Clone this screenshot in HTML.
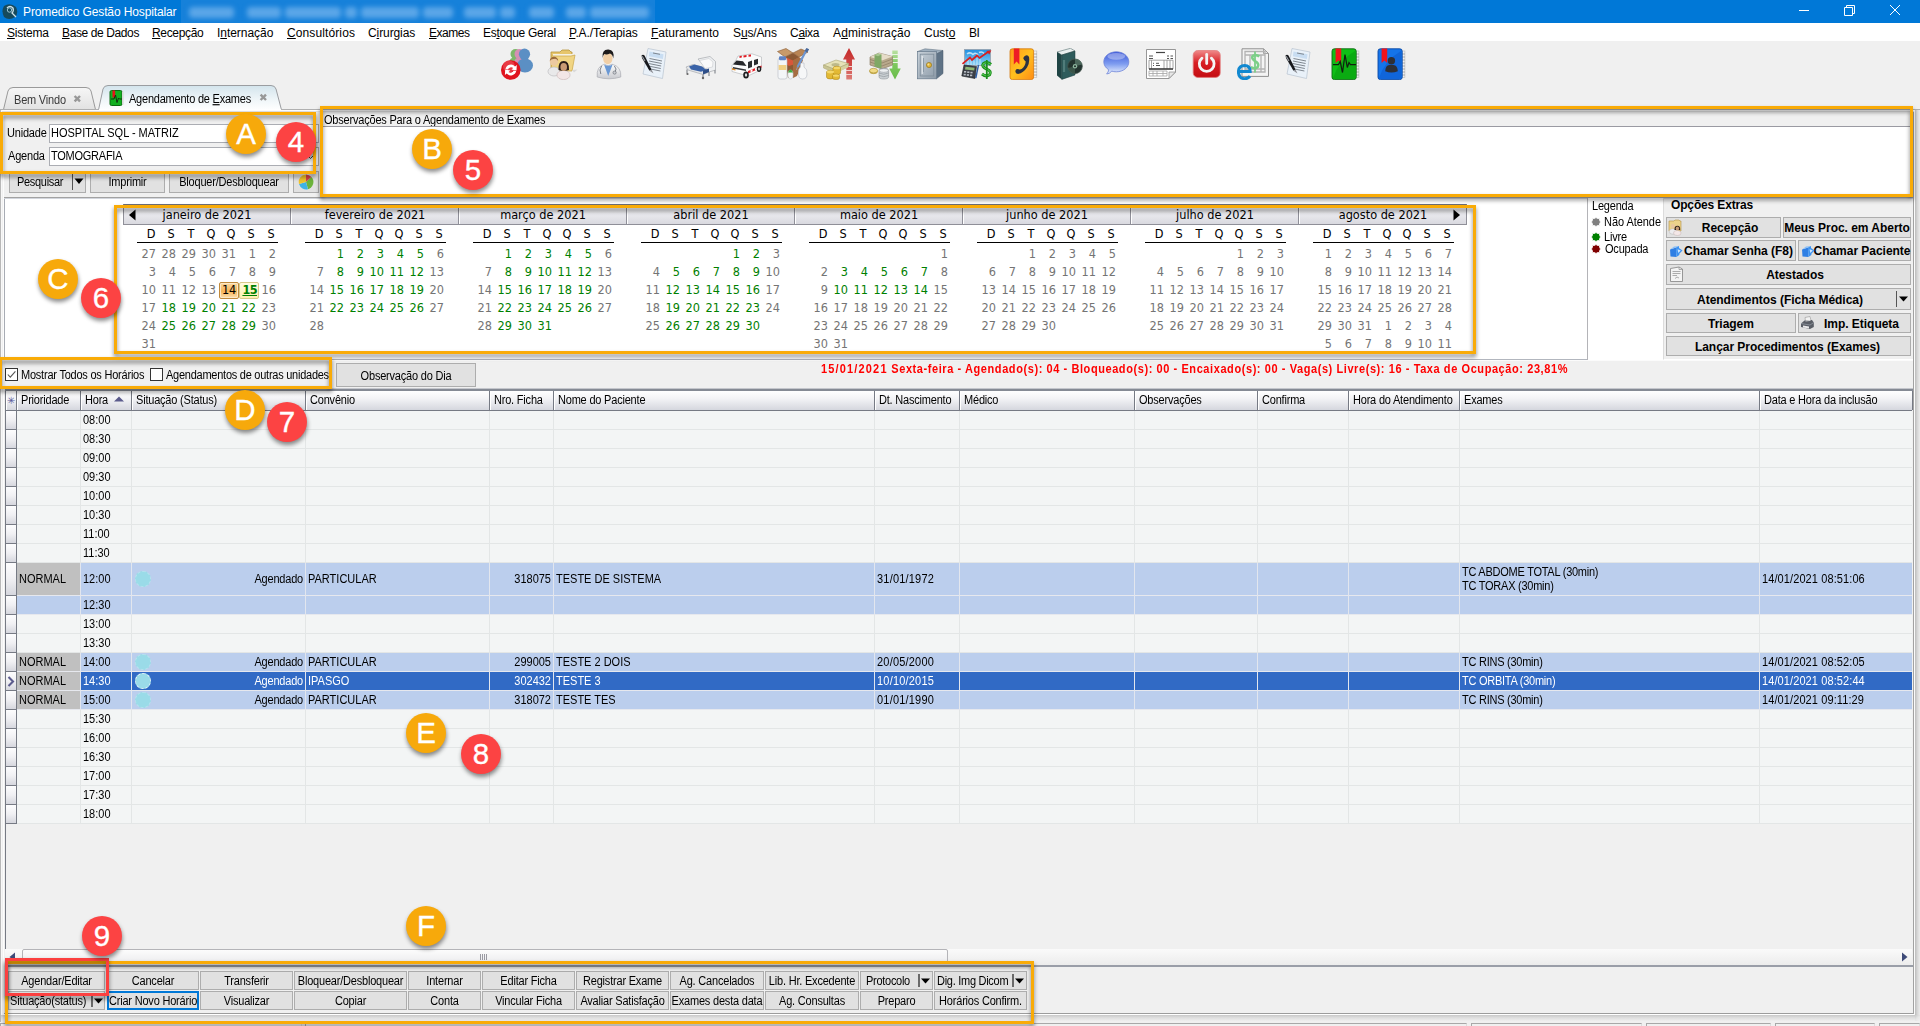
<!DOCTYPE html><html lang="pt-BR"><head><meta charset="utf-8"><title>Promedico Gestão Hospitalar</title><style>
*{box-sizing:border-box}
html,body{margin:0;padding:0}
body{width:1920px;height:1026px;overflow:hidden;background:#f0f0f0;position:relative;
 font-family:"Liberation Sans",sans-serif;font-size:11px;color:#000;line-height:13px}
.a{position:absolute}
.t{position:absolute;white-space:pre;letter-spacing:-.2px}
.u{text-decoration:underline}
.x{display:inline-block;line-height:13px;transform:scaleY(1.15);transform-origin:0 10px}
.btn{position:absolute;background:#e1e1e1;border:1px solid #adadad;text-align:center;white-space:pre;letter-spacing:-.2px}
.bb{position:absolute;background:#e1e1e1;border:1px solid #adadad;text-align:center;white-space:pre;font-weight:bold;font-size:12px;letter-spacing:.1px}
.inp{position:absolute;background:#fff;border:1px solid #abadb3;white-space:pre;padding:2px 0 0 1px;letter-spacing:0}
.obox{position:absolute;border:3px solid #f9ab07;filter:drop-shadow(.5px 3px 2.2px rgba(0,0,0,.5))}
.rbox{position:absolute;border:3px solid #fb4040;filter:drop-shadow(.5px 3px 2.2px rgba(0,0,0,.5))}
.badge{position:absolute;width:40px;height:40px;border-radius:50%;color:#fff;font-size:29.5px;line-height:39.4px;-webkit-text-stroke:.35px #fff;text-align:center;
 box-shadow:.5px 3px 4px rgba(0,0,0,.45)}
.bo{background:#f7a90b}
.br{background:#fc4343}
.cal{font-family:"DejaVu Sans Condensed","DejaVu Sans",sans-serif;font-size:12.6px;line-height:18px}
.cal .d{position:absolute;width:24px;text-align:right;color:#747474;white-space:pre}
.cal .g{color:#008000}
.cal .h{position:absolute;width:20px;text-align:center;color:#000}
.cal .m{position:absolute;text-align:center;color:#000;height:16px;line-height:14px}
.gh{position:absolute;top:0;height:19px;border-right:1px solid #767a84;border-left:1px solid #fff;padding:3px 0 0 4px;white-space:pre;letter-spacing:-.2px;
 background:linear-gradient(#ffffff,#f3f3f6 40%,#d5d7de);}
.row{position:absolute;left:17px;width:1895px;background:#f3f5f5;border-bottom:1px solid #e3e6e6}
.row.hl{background:#bbceed;border-bottom-color:#e6e8ee}
.row.sel{background:#316ac5;color:#fff;border-bottom-color:#e6e8ee}
.c{position:absolute;top:0;bottom:0;white-space:pre;letter-spacing:0}
.vl{position:absolute;width:1px;background:#e3e6e6}
</style></head><body>
<div class="a" style="left:0;top:0;width:1920px;height:23px;background:#0078d7"></div>
<div class="a" style="left:181px;top:0;width:474px;height:24px;background:#1681da;overflow:hidden"><div class="a" style="left:0;top:0;width:474px;height:24px;filter:blur(2.4px)"><div class="a" style="left:8px;top:7px;width:45px;height:11px;background:#5ba6e8;border-radius:4px"></div><div class="a" style="left:66px;top:7px;width:34px;height:11px;background:#5ba6e8;border-radius:4px"></div><div class="a" style="left:104px;top:7px;width:56px;height:11px;background:#5ba6e8;border-radius:4px"></div><div class="a" style="left:164px;top:7px;width:12px;height:11px;background:#5ba6e8;border-radius:4px"></div><div class="a" style="left:180px;top:7px;width:58px;height:11px;background:#5ba6e8;border-radius:4px"></div><div class="a" style="left:242px;top:7px;width:30px;height:11px;background:#5ba6e8;border-radius:4px"></div><div class="a" style="left:283px;top:7px;width:32px;height:11px;background:#5ba6e8;border-radius:4px"></div><div class="a" style="left:319px;top:7px;width:15px;height:11px;background:#5ba6e8;border-radius:4px"></div><div class="a" style="left:348px;top:7px;width:25px;height:11px;background:#5ba6e8;border-radius:4px"></div><div class="a" style="left:385px;top:7px;width:20px;height:11px;background:#5ba6e8;border-radius:4px"></div><div class="a" style="left:409px;top:7px;width:59px;height:11px;background:#5ba6e8;border-radius:4px"></div></div></div>
<svg class="a" style="left:2px;top:3px" width="17" height="17" viewBox="0 0 17 17"><path d="M2 3 Q8 -1 14 4 Q17 10 13 14 Q7 18 2 14 Q-1 8 2 3Z" fill="#164a5c"/><path d="M5 5 Q8 2 11 5 Q12 8 10 10 L14 14" stroke="#cfe3ea" stroke-width="1.3" fill="none"/><circle cx="7.5" cy="7" r="2.2" fill="none" stroke="#9cc3cf" stroke-width="1"/></svg>
<div class="t" style="left:23px;top:4.5px;font-size:12px;line-height:15px;color:#fff;letter-spacing:-.12px">Promedico Gestão Hospitalar</div>
<svg class="a" style="left:1790px;top:0" width="130" height="23" viewBox="0 0 130 23"><g stroke="#fff" stroke-width="1" fill="none"><path d="M9 10.5H19"/><path d="M54.5 7.5H62.5V15.5H54.5Z"/><path d="M56.5 7.5V5.5H64.5V13.5H62.5"/><path d="M100 5L110 15M110 5L100 15"/></g></svg>
<div class="a" style="left:0;top:23px;width:1920px;height:18px;background:#fff"></div>
<div class="t" style="left:7px;top:26px;font-size:12px;line-height:15px;letter-spacing:-0.24px"><span class="u">S</span>istema</div>
<div class="t" style="left:62px;top:26px;font-size:12px;line-height:15px;letter-spacing:-0.39px"><span class="u">B</span>ase de Dados</div>
<div class="t" style="left:152px;top:26px;font-size:12px;line-height:15px;letter-spacing:-0.34px"><span class="u">R</span>ecepção</div>
<div class="t" style="left:217px;top:26px;font-size:12px;line-height:15px;letter-spacing:-0.04px">I<span class="u">n</span>ternação</div>
<div class="t" style="left:287px;top:26px;font-size:12px;line-height:15px;letter-spacing:0.11px"><span class="u">C</span>onsultórios</div>
<div class="t" style="left:368px;top:26px;font-size:12px;line-height:15px;letter-spacing:-0.1px">C<span class="u">i</span>rurgias</div>
<div class="t" style="left:429px;top:26px;font-size:12px;line-height:15px;letter-spacing:-0.46px"><span class="u">E</span>xames</div>
<div class="t" style="left:483px;top:26px;font-size:12px;line-height:15px;letter-spacing:-0.3px">Es<span class="u">t</span>oque Geral</div>
<div class="t" style="left:569px;top:26px;font-size:12px;line-height:15px;letter-spacing:-0.09px"><span class="u">P</span>.A./Terapias</div>
<div class="t" style="left:651px;top:26px;font-size:12px;line-height:15px;letter-spacing:-0.01px"><span class="u">F</span>aturamento</div>
<div class="t" style="left:733px;top:26px;font-size:12px;line-height:15px;letter-spacing:-0.13px">S<span class="u">u</span>s/Ans</div>
<div class="t" style="left:790px;top:26px;font-size:12px;line-height:15px;letter-spacing:-0.3px">C<span class="u">a</span>ixa</div>
<div class="t" style="left:833px;top:26px;font-size:12px;line-height:15px;letter-spacing:0.12px">A<span class="u">d</span>ministração</div>
<div class="t" style="left:924px;top:26px;font-size:12px;line-height:15px;letter-spacing:-0.01px">Cust<span class="u">o</span></div>
<div class="t" style="left:969px;top:26px;font-size:12px;line-height:15px;letter-spacing:-0.42px">BI</div>
<svg class="a" style="left:501px;top:48px" width="32" height="32" viewBox="0 0 32 32"><circle cx="14.5" cy="6" r="5" fill="#7db86a"/><ellipse cx="14" cy="15" rx="6" ry="6" fill="#7db86a"/>
<circle cx="18.5" cy="6" r="5" fill="#d58fb4"/><ellipse cx="19" cy="15" rx="6" ry="6" fill="#d58fb4"/>
<circle cx="23.5" cy="6.2" r="5.6" fill="#5b8fc4"/><ellipse cx="24" cy="17.5" rx="8" ry="7" fill="#5b8fc4"/>
<circle cx="9.8" cy="22" r="9.8" fill="#e0131e"/><circle cx="8" cy="18.5" r="6" fill="#f2616a" opacity=".5"/>
<path d="M4.5 21A5.5 5.5 0 0 1 14 18.5L15.8 17L15.5 22.5L10.5 21.5L12.2 20A3.3 3.3 0 0 0 7 21.5Z" fill="#fff"/>
<path d="M15.2 23A5.5 5.5 0 0 1 5.7 25.5L3.9 27L4.2 21.5L9.2 22.5L7.5 24A3.3 3.3 0 0 0 12.7 22.5Z" fill="#fff"/></svg>
<svg class="a" style="left:547px;top:48px" width="32" height="32" viewBox="0 0 32 32"><path d="M4 4H13L15 2H22L24 4H25V22H4Z" fill="#e7c66c" stroke="#b8963c" stroke-width=".8"/>
<path d="M6 6H26L27 22H6Z" fill="#f6f1e2"/><path d="M4.5 8H24L28 7L25 23H4.5Z" fill="#f1d583" stroke="#c9a548" stroke-width=".7"/>
<path d="M25 22L30.5 21.5L27 24.5Z" fill="#d9d9d9"/>
<ellipse cx="7" cy="23.5" rx="6" ry="4.5" fill="#e9e9ea" stroke="#b5b5b8" stroke-width=".6"/><circle cx="7" cy="13.5" r="4.2" fill="#ecc9a0"/><path d="M2.8 13A4.2 4.2 0 0 1 11.2 13Q9 10 7 11Q4.5 10.5 2.8 13Z" fill="#9a6a3a"/>
<ellipse cx="16.5" cy="27" rx="6.6" ry="4.6" fill="#f2e6e6" stroke="#c7b3b3" stroke-width=".6"/><path d="M11.5 22Q11 13 16.7 13Q22.5 13 22 22Q19 23 16.7 22.5Q14 23 11.5 22Z" fill="#2a1d18"/><ellipse cx="16.7" cy="19" rx="3.3" ry="4" fill="#c89a74"/></svg>
<svg class="a" style="left:593px;top:48px" width="32" height="32" viewBox="0 0 32 32"><defs><linearGradient id="dc" x1="0" y1="0" x2="0" y2="1"><stop offset="0" stop-color="#fdfdfd"/><stop offset="1" stop-color="#c9cbd0"/></linearGradient></defs>
<path d="M4.2 29Q3.2 18.5 11.5 16.2L15 18L19 16.2Q28.6 18.5 27.8 29Q16 32.6 4.2 29Z" fill="url(#dc)" stroke="#a9abb1" stroke-width=".7"/>
<path d="M11 16.5L15.2 28L19.6 16.5Q15.2 19 11 16.5Z" fill="#6a98d4"/>
<ellipse cx="14.8" cy="10.3" rx="4.7" ry="6" fill="#f1cfa6"/><path d="M9.6 10Q8.6 1.2 15.4 1.5Q22 1.8 20.2 10.5Q19.8 6.5 17 5.5Q13.5 7 11.3 6Q9.9 7.5 9.6 10Z" fill="#1e1c1c"/>
<path d="M8.6 18Q5.8 22 7.8 26M21.4 18Q24.4 21 22 24" stroke="#7d828c" stroke-width="1" fill="none"/><circle cx="21.6" cy="24.6" r="1.6" fill="#c9ccd2" stroke="#646870" stroke-width=".6"/></svg>
<svg class="a" style="left:639px;top:48px" width="32" height="32" viewBox="0 0 32 32"><path d="M9 0.5L27 4L23.5 30.5L4 26Z" fill="#e9f1f9" stroke="#b7c3d0" stroke-width=".7"/>
<path d="M10.5 3.5L24.5 6.2L23.9 11L9.9 8.3Z" fill="#c8ddf2"/>
<g stroke="#7f8790" stroke-width="1"><path d="M10.5 10.5L23 13"/><path d="M10 13L22.6 15.5"/><path d="M9.7 15.5L22.2 18"/><path d="M9.3 18L21.8 20.5"/><path d="M9 20.5L21.4 23"/><path d="M14 5L21 6.3"/></g>
<path d="M2.5 7.5Q4 6 5.5 7.5L12.5 21.5L10.5 22.8L3 10Z" fill="#17181c"/><path d="M10.5 22.8L12.5 21.5L14.5 25.5Z" fill="#8d8f96"/><path d="M3.2 8.2L6 13" stroke="#9da1aa" stroke-width="1.1"/></svg>
<svg class="a" style="left:685px;top:48px" width="32" height="32" viewBox="0 0 32 32"><path d="M13 11L25 8.5L30.5 13.5L30.5 22L24 24Z" fill="#eef0f2" stroke="#a6a9ae" stroke-width=".7"/>
<path d="M1 19L8 16.5L19 19.5L24 24L18 26.5L3 22Z" fill="#e4e6e9" stroke="#a6a9ae" stroke-width=".7"/>
<path d="M4 18.6L9.5 16.6L17 18.4L21.5 22L16 23.8L6 21.5Z" fill="#3a63a8"/><path d="M14.5 12.5L24 10.5L28 14L27.5 19L20 20.5Z" fill="#fafafa" stroke="#c0c3c7" stroke-width=".5"/>
<path d="M2 21.5V25.5M18 26.5V30M24 24V28M30 22V25.5" stroke="#8e9298" stroke-width="1.3"/><path d="M18 22.5L24 20.5V24L18 26.5Z" fill="#2f4f88"/>
<circle cx="18" cy="30" r="1.2" fill="#666"/><circle cx="2.5" cy="26" r="1.1" fill="#666"/></svg>
<svg class="a" style="left:731px;top:48px" width="32" height="32" viewBox="0 0 32 32"><path d="M7 8L21 5.8L30.5 9V21.5L17 28L1 23.5V17.5L5 12Z" fill="#fbfbfb" stroke="#b9bbbe" stroke-width=".7"/>
<path d="M5.5 12.5L12 13.2L15.5 18L2 16.5Z" fill="#26282b"/><path d="M17 14L21 12.5V19L17 20.5Z" fill="#2b2d30"/><path d="M23 12L27 10.7V16L23 17.5Z" fill="#2b2d30"/>
<path d="M8.5 8L10.8 7.7V9.6L8.5 9.9ZM12.5 7.4L15.5 7V9L12.5 9.4ZM17.5 6.7L20 6.4V8.4L17.5 8.7Z" fill="#e01b22"/>
<path d="M17 23L30.5 17.5V19.8L17 25.4Z" fill="#e01b22"/><path d="M19.5 22L21.5 21.2V23.5L19.5 24.3ZM24 20.2L26 19.4V21.7L24 22.5Z" fill="#fff"/>
<path d="M1 20L4.5 20.8V22.5L1 21.7Z" fill="#e6902a"/><path d="M2 19L15 21.5V23L2 20.5Z" fill="#33363a"/>
<ellipse cx="15" cy="27" rx="2.8" ry="3.6" fill="#1c1d1f"/><ellipse cx="15" cy="27" rx="1.2" ry="1.7" fill="#dcdcdc"/><ellipse cx="28" cy="21" rx="2.2" ry="3" fill="#1c1d1f"/><ellipse cx="28" cy="21" rx=".9" ry="1.4" fill="#dcdcdc"/></svg>
<svg class="a" style="left:777px;top:48px" width="32" height="32" viewBox="0 0 32 32"><path d="M0.5 3.5L9 0.5L16 5L8 9Z" fill="#c79a6a" stroke="#8a5a32" stroke-width=".6"/><path d="M16 5L24 1L31 4L22 9Z" fill="#b98555" stroke="#8a5a32" stroke-width=".6"/>
<path d="M8 9L16 5L22 9L21 26L11 30Z" fill="#8c5a35"/><path d="M8 9L16 12.5L21.5 9.5L21 15L12 18L9 16Z" fill="#d9563a"/><path d="M16 12.5L22 9L26 12L20 28L16 30Z" fill="#a56d42"/>
<rect x="1" y="10" width="9" height="21" rx="2.2" fill="#f4f6f8" stroke="#b5bac2" stroke-width=".6"/><rect x="2" y="8.3" width="7" height="4" rx="1.2" fill="#5d82c4"/><rect x="1.6" y="17" width="7.8" height="5" fill="#f0cf83"/>
<ellipse cx="13.5" cy="26.5" rx="2.6" ry="4.5" fill="#f3f5f5" stroke="#b5bac2" stroke-width=".5"/><path d="M11 24.5Q13.5 18.5 16 24.5Z" fill="#3fae3f"/>
<path d="M21.5 26Q21 20.5 23.5 19V15H27V19Q30.5 21 30 26Q30 31 25.5 31Q21.5 31 21.5 26Z" fill="#f6f7f8" stroke="#b5bac2" stroke-width=".6"/>
<path d="M29.5 2L20.5 19" stroke="#6d95d0" stroke-width="2.2"/><path d="M30.8 0.6L29 3.8" stroke="#4a6a9c" stroke-width="3"/><path d="M20.5 19L19.4 22" stroke="#9aa0aa" stroke-width=".9"/></svg>
<svg class="a" style="left:823px;top:48px" width="32" height="32" viewBox="0 0 32 32"><defs><linearGradient id="ua" x1="0" y1="0" x2="0" y2="1"><stop offset="0" stop-color="#c42a2a"/><stop offset=".55" stop-color="#d04a48"/><stop offset="1" stop-color="#dd7e78"/></linearGradient></defs>
<path d="M26 0L32 11.5H29V31.5H23.3V11.5H20Z" fill="url(#ua)"/><path d="M23 18.5H29.2M23 22.5H29.2M23 26.5H29.2" stroke="#f0d5d2" stroke-width="1.2"/>
<path d="M0.5 17L13 12L25.5 15.5L12 21.5Z" fill="#e6e2b8" stroke="#a8a473" stroke-width=".6"/><path d="M0.5 17V20L12 25V21.5ZM12 21.5V25L25.5 18.5V15.5Z" fill="#c9c492" stroke="#a8a473" stroke-width=".5"/>
<ellipse cx="12.5" cy="16.7" rx="4" ry="1.7" fill="#bdb98a"/>
<path d="M14 21L25 16.5V19.5L14 24.5Z" fill="#d7d2a2"/>
<g fill="#e3b934" stroke="#a37d12" stroke-width=".5"><path d="M3.5 24Q3.5 22.3 7.5 22.3Q11.5 22.3 11.5 24V29Q11.5 31 7.5 31Q3.5 31 3.5 29Z"/><path d="M10 20Q10 18.3 13.8 18.3Q17.5 18.3 17.5 20V25Q17.5 26.8 13.8 26.8Q10 26.8 10 25Z"/><path d="M9.5 27.5Q9.5 26 13 26Q16.5 26 16.5 27.5V30Q16.5 31.6 13 31.6Q9.5 31.6 9.5 30Z"/></g>
<ellipse cx="7.5" cy="24" rx="3.6" ry="1.4" fill="#f4d768"/><ellipse cx="13.8" cy="20" rx="3.4" ry="1.3" fill="#f4d768"/><ellipse cx="13" cy="27.6" rx="3.2" ry="1.2" fill="#f4d768"/></svg>
<svg class="a" style="left:869px;top:48px" width="32" height="32" viewBox="0 0 32 32"><defs><linearGradient id="da" x1="0" y1="0" x2="0" y2="1"><stop offset="0" stop-color="#b9e0a2"/><stop offset=".5" stop-color="#7cc85d"/><stop offset="1" stop-color="#69bc4a"/></linearGradient></defs>
<path d="M23.3 2.5H28.7V20.5H31.8L26 31.5L20.2 20.5H23.3Z" fill="url(#da)"/><path d="M23 6.5H29M23 10.5H29M23 14.5H29" stroke="#e9f4e2" stroke-width="1.2"/>
<path d="M1 9L10 5L23.5 8.5V17L13 21L1 17Z" fill="#b9a98c" stroke="#85765c" stroke-width=".6"/><path d="M1 9L10 5L23.5 8.5L13 12.5Z" fill="#e6dcc8"/>
<path d="M1 11.5L13 15L23.5 11M1 14L13 18L23.5 14" stroke="#85765c" stroke-width=".6" fill="none"/>
<path d="M5.5 7L9 5.4L12.5 6.4V20.8L8.5 19.6L5.5 18.5Z" fill="#7fa865"/><path d="M5.5 7L9 5.4L12.5 6.4L9 8.2Z" fill="#a9c892"/>
<ellipse cx="4.6" cy="23.4" rx="4" ry="2.3" fill="#e3c45a" stroke="#9f8426" stroke-width=".5"/><ellipse cx="4.6" cy="22.6" rx="4" ry="2.3" fill="#f1da85" stroke="#9f8426" stroke-width=".5"/>
<path d="M10 22.5Q10 20.3 14.8 20.3Q19.6 20.3 19.6 22.5V28.8Q19.6 31 14.8 31Q10 31 10 28.8Z" fill="#c9ced2" stroke="#81878d" stroke-width=".5"/>
<ellipse cx="14.8" cy="22.5" rx="4.5" ry="1.8" fill="#eef0f2" stroke="#81878d" stroke-width=".4"/><path d="M10 25Q14.8 27.6 19.6 25M10 27.4Q14.8 30 19.6 27.4" stroke="#81878d" stroke-width=".5" fill="none"/></svg>
<svg class="a" style="left:915px;top:48px" width="32" height="32" viewBox="0 0 32 32"><defs><linearGradient id="sf" x1="0" y1="0" x2="1" y2="1"><stop offset="0" stop-color="#c9d2da"/><stop offset="1" stop-color="#8d9ba8"/></linearGradient></defs>
<path d="M2.5 3.5L10 0.8L28 2.5L21.5 6Z" fill="#9fb0bf" stroke="#5e6f7e" stroke-width=".5"/>
<path d="M21.5 6L28 2.5V25.5L21.5 30.8Z" fill="#5f7386" stroke="#4b5b6b" stroke-width=".5"/>
<rect x="2.5" y="3.5" width="19" height="27.3" fill="url(#sf)" stroke="#66788a" stroke-width=".7"/>
<rect x="5.2" y="6.2" width="13.6" height="21.8" fill="none" stroke="#7d8c9a" stroke-width=".8"/><path d="M7.2 8V26" stroke="#eef2f5" stroke-width="1"/><path d="M8.5 10V24" stroke="#7d8c9a" stroke-width=".7"/>
<circle cx="14" cy="17" r="2.6" fill="#e0b43a" stroke="#8d6d14" stroke-width=".6"/><circle cx="13.4" cy="16.4" r="1" fill="#f6e08e"/></svg>
<svg class="a" style="left:961px;top:48px" width="32" height="32" viewBox="0 0 32 32"><defs><linearGradient id="sk" x1="0" y1="0" x2="0" y2="1"><stop offset="0" stop-color="#1e8fe0"/><stop offset="1" stop-color="#8fd2f6"/></linearGradient></defs>
<rect x="3.4" y="1.4" width="26.2" height="16" fill="url(#sk)" stroke="#9aa3ad" stroke-width=".8"/>
<path d="M6 6Q9 3.5 12 6.5Q15 4 17 7M18 4.5Q21 3 23 5.5" stroke="#dff1fb" stroke-width="1.5" fill="none" opacity=".8"/>
<path d="M7 17V12M10 17V10M13 17V12.5M16 17V9.5M19 17V11" stroke="#e8f5fc" stroke-width="1" opacity=".7"/>
<path d="M1.5 15.8L9 9.5L11 12L16 7.5L18.5 10L27 4" stroke="#d91f1f" stroke-width="1.7" fill="none"/><path d="M30.4 2.2L25.3 3L28.3 6.6Z" fill="#d91f1f"/>
<path d="M3 17L15.5 18.5L14 30.5L0.8 28Z" fill="#3b3f46" stroke="#1f2226" stroke-width=".6"/><path d="M4.5 18.7L13.6 19.8L13.2 22.6L4 21.4Z" fill="#8fb873"/>
<g fill="#b7bcc4"><rect x="3" y="23" width="2.2" height="1.6"/><rect x="6.2" y="23.4" width="2.2" height="1.6"/><rect x="9.4" y="23.8" width="2.2" height="1.6"/><rect x="2.6" y="25.8" width="2.2" height="1.6"/><rect x="5.8" y="26.2" width="2.2" height="1.6"/><rect x="9" y="26.6" width="2.2" height="1.6"/></g>
<path d="M17.5 17L14.8 30" stroke="#2c5ea8" stroke-width="1.4"/>
<path d="M30 16.5Q26 13 22.5 15.5Q20 18.5 25.8 21Q31 23.5 28.6 26.8Q25 29.3 21 26" stroke="#1d8f1d" stroke-width="3" fill="none"/><path d="M30 16.5Q26 13 22.5 15.5Q20 18.5 25.8 21Q31 23.5 28.6 26.8Q25 29.3 21 26" stroke="#5fd15f" stroke-width="1" fill="none"/>
<path d="M25.8 12V31" stroke="#1d8f1d" stroke-width="1.8"/></svg>
<svg class="a" style="left:1007px;top:48px" width="32" height="32" viewBox="0 0 32 32"><defs><linearGradient id="pb" x1="0" y1="0" x2="1" y2="1"><stop offset="0" stop-color="#ff9a1a"/><stop offset=".5" stop-color="#ffc01e"/><stop offset="1" stop-color="#ff8c14"/></linearGradient></defs>
<rect x="24" y="3" width="5.8" height="26.5" fill="#f1f1f1" stroke="#b9b9b9" stroke-width=".6"/><path d="M26.5 6H30M26.5 9H30M26.5 12H30M26.5 15H30M26.5 18H30M26.5 21H30M26.5 24H30M26.5 27H30" stroke="#9d9d9d" stroke-width=".8"/>
<rect x="3" y="0.8" width="23.6" height="30.8" rx="2.4" fill="url(#pb)" stroke="#d4780c" stroke-width=".8"/>
<path d="M6.8 0.5H12.4V16.4L9.6 13.6L6.8 16.4Z" fill="#ee1c25"/>
<path d="M17.5 8.2Q20.8 6.2 22 9Q23 14.5 20 19.5Q16.5 24.8 11 26Q7.8 25.5 8.5 22.4Q9.4 20.6 11.8 21.2Q13.2 22 15 20.8Q18.4 18 18.7 13.5Q17.2 12.2 16.4 10.8Q16.2 9 17.5 8.2Z" fill="#2c3342"/></svg>
<svg class="a" style="left:1053px;top:48px" width="32" height="32" viewBox="0 0 32 32"><path d="M4 4L17.5 0.3L22 3L8.8 7Z" fill="#e9eeee" stroke="#3c5b5b" stroke-width=".5"/>
<path d="M4 4L8.8 7V31.4L4 27.5Z" fill="#1f4444"/><path d="M8.8 7L22 3V27L8.8 31.4Z" fill="#2f5c5c" stroke="#1b3a3a" stroke-width=".5"/>
<path d="M11 12V24" stroke="#5f8a88" stroke-width="2.2" opacity=".7"/>
<circle cx="22" cy="18.3" r="7.3" fill="#23342f" stroke="#42564f" stroke-width=".8"/><path d="M22 11A7.3 7.3 0 0 1 29 16.5L22 18.3Z" fill="#5d7d6d" opacity=".7"/><path d="M22 25.6A7.3 7.3 0 0 1 15 20L22 18.3Z" fill="#4a6a5a" opacity=".6"/>
<circle cx="22" cy="18.3" r="2.2" fill="#8fb8a0"/><circle cx="22" cy="18.3" r="1" fill="#1d2b27"/></svg>
<svg class="a" style="left:1099px;top:48px" width="32" height="32" viewBox="0 0 32 32"><defs><linearGradient id="cb" x1="0" y1="0" x2="0" y2="1"><stop offset="0" stop-color="#3a55d8"/><stop offset=".55" stop-color="#7f9df0"/><stop offset="1" stop-color="#e9f0fd"/></linearGradient></defs>
<path d="M17.3 3.8C24.3 3.8 29.8 8.2 29.8 13.8C29.8 19.4 24.3 23.8 17.3 23.8C15.6 23.8 14 23.6 12.6 23.1C11.4 25 9.6 25.8 7.6 25.9C8.9 24.8 9.6 23.3 9.5 21.6C6.6 19.8 4.8 17 4.8 13.8C4.8 8.2 10.3 3.8 17.3 3.8Z" fill="url(#cb)" stroke="#6b82d8" stroke-width=".8"/>
<ellipse cx="17.3" cy="8.3" rx="9" ry="3.4" fill="#fff" opacity=".35"/></svg>
<svg class="a" style="left:1145px;top:48px" width="32" height="32" viewBox="0 0 32 32"><path d="M1.5 1.5H30.5V24L24 30.5H1.5Z" fill="#fff" stroke="#8b8b8b" stroke-width=".9"/><path d="M24 30.5V24H30.5Z" fill="#e6e6e6" stroke="#8b8b8b" stroke-width=".7"/>
<path d="M11 4.5H20" stroke="#444" stroke-width="1.2"/><path d="M4 8H8M22 8H24M25.5 8H28M4 10.5H8M22 10.5H24M25.5 10.5H28" stroke="#555" stroke-width="1"/>
<path d="M4 12.2H28V21H4ZM6.5 12.2V21M19 12.2V21M22 12.2V21M25 12.2V21" stroke="#8e8e8e" stroke-width=".8" fill="none"/><path d="M4 21H28" stroke="#333" stroke-width="1.4"/>
<path d="M8 15.3H9M11 15.3H14M8 17.5H9M11 17.5H15" stroke="#555" stroke-width="1"/>
<path d="M4 23H22V28H4ZM4 25.5H22M8 23V28M12 23V28M18 23V28" stroke="#a5a5a5" stroke-width=".8" fill="none"/></svg>
<svg class="a" style="left:1191px;top:48px" width="32" height="32" viewBox="0 0 32 32"><defs><linearGradient id="pw" x1="0" y1="0" x2="0" y2="1"><stop offset="0" stop-color="#f08a8a"/><stop offset=".45" stop-color="#d81f24"/><stop offset="1" stop-color="#c40d12"/></linearGradient></defs>
<rect x="2.2" y="2.6" width="27" height="26.8" rx="4.5" fill="url(#pw)" stroke="#e27a7a" stroke-width=".8"/>
<path d="M11 10.2A7.4 7.4 0 1 0 20.4 10.2" stroke="#f4f4f4" stroke-width="2.8" fill="none" stroke-linecap="round"/><path d="M15.7 6.5V15.5" stroke="#f4f4f4" stroke-width="2.8" stroke-linecap="round"/></svg>
<svg class="a" style="left:1237px;top:48px" width="32" height="32" viewBox="0 0 32 32"><path d="M5 0.8H26.5L31.5 5.5V28.4H5Z" fill="#f4f4f4" stroke="#8f8f8f" stroke-width="1"/><path d="M26.5 0.8V5.5H31.5" fill="none" stroke="#8f8f8f" stroke-width=".8"/>
<path d="M8 3.5H28V24H8ZM8 7H28M13 7V24M24 7V24M8 21H28" stroke="#b3b3b3" stroke-width="1.3" fill="none"/>
<path d="M22.3 8.6Q19.5 6.2 16.2 7.6Q13.6 9.6 17.6 12.8Q22.6 15.4 20.8 18.8Q18 21.6 13.8 19" stroke="#7ccf88" stroke-width="2.6" fill="none"/><path d="M18 3.5V24.5" stroke="#7ccf88" stroke-width="1.8"/>
<path d="M2 23.6H13.2Q13.2 17.6 7.6 17.6Q1.6 17.8 1.4 24Q1.8 30.6 8 30.8Q11.4 30.6 13 28.2" stroke="#1188d0" stroke-width="3" fill="none"/></svg>
<svg class="a" style="left:1283px;top:48px" width="32" height="32" viewBox="0 0 32 32"><path d="M9 0.5L27 4L23.5 30.5L4 26Z" fill="#e9f1f9" stroke="#b7c3d0" stroke-width=".7"/>
<path d="M10.5 3.5L24.5 6.2L23.9 11L9.9 8.3Z" fill="#c8ddf2"/>
<g stroke="#7f8790" stroke-width="1"><path d="M10.5 10.5L23 13"/><path d="M10 13L22.6 15.5"/><path d="M9.7 15.5L22.2 18"/><path d="M9.3 18L21.8 20.5"/><path d="M9 20.5L21.4 23"/><path d="M14 5L21 6.3"/></g>
<path d="M2.5 7.5Q4 6 5.5 7.5L12.5 21.5L10.5 22.8L3 10Z" fill="#17181c"/><path d="M10.5 22.8L12.5 21.5L14.5 25.5Z" fill="#8d8f96"/><path d="M3.2 8.2L6 13" stroke="#9da1aa" stroke-width="1.1"/></svg>
<svg class="a" style="left:1329px;top:48px" width="32" height="32" viewBox="0 0 32 32"><rect x="24.5" y="3" width="5.4" height="26.5" fill="#f1f1f1" stroke="#b9b9b9" stroke-width=".6"/><path d="M27 6H30M27 9H30M27 12H30M27 15H30M27 18H30M27 21H30M27 24H30M27 27H30" stroke="#9d9d9d" stroke-width=".8"/>
<rect x="3" y="0.8" width="24.2" height="30.8" rx="2.4" fill="#0fbf16" stroke="#0a6a10" stroke-width=".9"/><path d="M4 30Q10 12 26 3V29Q26 31 24 31H5Z" fill="#0a9a10" opacity=".55"/>
<path d="M6.6 0.5H12.2V15L9.4 12.4L6.6 15Z" fill="#f0131c"/><path d="M4 16.5H9.5L11.2 13.5L13.5 24.5L16 6.5L18.3 19.5L20 14.5L21.4 16.5H27" stroke="#10200f" stroke-width="1.25" fill="none"/></svg>
<svg class="a" style="left:1375px;top:48px" width="32" height="32" viewBox="0 0 32 32"><rect x="24.5" y="3" width="5.4" height="26.5" fill="#f1f1f1" stroke="#b9b9b9" stroke-width=".6"/><path d="M27 6H30M27 9H30M27 12H30M27 15H30M27 18H30M27 21H30M27 24H30M27 27H30" stroke="#9d9d9d" stroke-width=".8"/>
<rect x="3" y="0.8" width="24.2" height="30.8" rx="2.4" fill="#1474ea" stroke="#0b47a3" stroke-width=".9"/><path d="M4 30Q10 12 26 3V29Q26 31 24 31H5Z" fill="#0d5acb" opacity=".55"/>
<path d="M6.6 0.5H12.2V15L9.4 12.4L6.6 15Z" fill="#f0131c"/><circle cx="16.4" cy="12.8" r="3.7" fill="#2e2f35"/><path d="M10.2 23.2Q10.4 17.6 14.4 17H18.4Q22.6 17.6 22.8 23.2Q16.4 25.8 10.2 23.2Z" fill="#2e2f35"/></svg>
<svg class="a" style="left:0;top:84px" width="300" height="27" viewBox="0 0 300 27">
<defs><linearGradient id="tg1" x1="0" y1="0" x2="0" y2="1"><stop offset="0" stop-color="#f6f6f6"/><stop offset="1" stop-color="#e2e2e2"/></linearGradient>
<linearGradient id="tg2" x1="0" y1="0" x2="0" y2="1"><stop offset="0" stop-color="#d3e4ec"/><stop offset=".55" stop-color="#eef5f8"/><stop offset="1" stop-color="#ffffff"/></linearGradient></defs>
<path d="M3.5 25.5 L8 7 Q9 3.5 13 3.5 H86 Q90 3.5 91 7 L95.5 25.5 Z" fill="url(#tg1)" stroke="#9a9a9a" stroke-width="1"/>
<path d="M98.5 26 L103 5 Q104 1.5 108 1.5 H271 Q275 1.5 276 5 L281.5 26 Z" fill="url(#tg2)" stroke="#9b9da1" stroke-width="1"/>
<path d="M99 26H281" stroke="#fff" stroke-width="2"/>
<g stroke="#989898" stroke-width="2.4"><path d="M74.6 12L80 17.4M80 12L74.6 17.4"/><path d="M260.6 10.6L266 16M266 10.6L260.6 16"/></g>
<g transform="translate(110,6)"><rect x="0" y="0.5" width="12" height="15" rx="1.5" fill="#12b020" stroke="#0a6a12" stroke-width="1"/><rect x="12" y="1.5" width="1.6" height="13" fill="#d8d8d8"/><rect x="2.5" y="0.5" width="2.6" height="7" fill="#e8101a"/><path d="M1 9H4L5.5 5L7 12.5L8.5 8L9.5 9H12" stroke="#103010" stroke-width="1" fill="none"/></g>
</svg>
<div class="t" style="left:14px;top:94px;color:#3a3a3a"><span class="x">Bem Vindo</span></div>
<div class="t" style="left:129px;top:93px;letter-spacing:-.22px"><span class="x">Agendamento de <span class="u">E</span>xames</span></div>
<div class="a" style="left:0;top:109px;width:1920px;height:1px;background:#b0b0b0"></div>
<div class="a" style="left:99px;top:109px;width:182px;height:1px;background:#fff"></div>
<div class="a" style="left:0;top:110px;width:1920px;height:1px;background:#fff"></div>
<div class="a" style="left:0;top:111px;width:1920px;height:1px;background:#e3e3e3"></div>
<div class="t" style="left:7px;top:127px"><span class="x">Unidade</span></div>
<div class="t" style="left:8px;top:150px"><span class="x">Agenda</span></div>
<div class="inp" style="left:49px;top:124px;width:270px;height:19px"><span class="x">HOSPITAL SQL - MATRIZ</span></div>
<div class="inp" style="left:49px;top:147px;width:270px;height:19px;letter-spacing:-.25px"><span class="x">TOMOGRAFIA</span></div>
<svg class="a" style="left:303px;top:124px" width="15" height="42" viewBox="0 0 15 42"><path d="M4 8L7.5 11.5L11 8M4 31L7.5 34.5L11 31" stroke="#444" fill="none" stroke-width="1"/></svg>
<div class="btn" style="left:9px;top:171px;width:77px;height:22px;line-height:20px;text-align:left;padding-left:7px;letter-spacing:-.3px"><span class="x">Pesquisar</span></div>
<div class="a" style="left:72px;top:174px;width:1px;height:16px;background:#555"></div>
<svg class="a" style="left:74px;top:178px" width="10" height="7" viewBox="0 0 10 7"><path d="M0.5 0.5H9.5L5 6Z" fill="#000"/></svg>
<div class="btn" style="left:90px;top:171px;width:75px;height:22px;line-height:20px"><span class="x">Imprimir</span></div>
<div class="btn" style="left:169px;top:171px;width:120px;height:22px;line-height:20px"><span class="x">Bloquer/Desbloquear</span></div>
<div class="btn" style="left:293px;top:171px;width:26px;height:22px"></div>
<svg class="a" style="left:297px;top:173px" width="18" height="18" viewBox="0 0 18 18"><circle cx="9" cy="9" r="7.6" fill="#e8e8e8"/>
<path d="M9 9L9 1.5A7.5 7.5 0 0 1 14.5 4Z" fill="#d8434a"/><path d="M9 9L14.5 4A7.5 7.5 0 0 1 11 16.2Z" fill="#6cb33a"/>
<path d="M9 9L11 16.2A7.5 7.5 0 0 1 2 11Z" fill="#3fb2e4"/><path d="M9 9L2 11A7.5 7.5 0 0 1 9 1.5Z" fill="#f0c22c"/></svg>
<div class="t" style="left:324px;top:114px;letter-spacing:-.2px"><span class="x">Observações Para o Agendamento de Exames</span></div>
<div class="a" style="left:322px;top:126px;width:1590px;height:70px;background:#fff;border:1px solid #c4c4c8;border-top-color:#9a9aa2"></div>
<div class="a" style="left:4px;top:197px;width:1909px;height:2px;background:linear-gradient(#a2a2a2 50%,#d2d5dc 50%)"></div>
<div class="a" style="left:4px;top:199px;width:1584px;height:161px;background:#fff;border:1px solid #a8acb4;border-top:none;border-right-color:#b2b6be;border-bottom-color:#b2b6be"></div>
<div class="a" style="left:123px;top:204px;width:1344px;height:21px;background:linear-gradient(#f6f6f8,#ececf0 40%,#d9d9df);border:1px solid #8f8f98;border-top-color:#6f6f78"></div>
<div class="cal">
<div class="m" style="left:123px;top:208px;width:168px">janeiro de 2021</div>
<div class="h" style="left:141px;top:225px">D</div>
<div class="h" style="left:161px;top:225px">S</div>
<div class="h" style="left:181px;top:225px">T</div>
<div class="h" style="left:201px;top:225px">Q</div>
<div class="h" style="left:221px;top:225px">Q</div>
<div class="h" style="left:241px;top:225px">S</div>
<div class="h" style="left:261px;top:225px">S</div>
<div class="a" style="left:137px;top:242px;width:141px;height:1px;background:#000"></div>
<div class="d" style="left:132px;top:245px">27</div>
<div class="d" style="left:152px;top:245px">28</div>
<div class="d" style="left:172px;top:245px">29</div>
<div class="d" style="left:192px;top:245px">30</div>
<div class="d" style="left:212px;top:245px">31</div>
<div class="d" style="left:232px;top:245px">1</div>
<div class="d" style="left:252px;top:245px">2</div>
<div class="d" style="left:132px;top:263px">3</div>
<div class="d" style="left:152px;top:263px">4</div>
<div class="d" style="left:172px;top:263px">5</div>
<div class="d" style="left:192px;top:263px">6</div>
<div class="d" style="left:212px;top:263px">7</div>
<div class="d" style="left:232px;top:263px">8</div>
<div class="d" style="left:252px;top:263px">9</div>
<div class="d" style="left:132px;top:281px">10</div>
<div class="d" style="left:152px;top:281px">11</div>
<div class="d" style="left:172px;top:281px">12</div>
<div class="d" style="left:192px;top:281px">13</div>
<div class="d" style="left:252px;top:281px">16</div>
<div class="d" style="left:132px;top:299px">17</div>
<div class="d g" style="left:152px;top:299px">18</div>
<div class="d g" style="left:172px;top:299px">19</div>
<div class="d g" style="left:192px;top:299px">20</div>
<div class="d g" style="left:212px;top:299px">21</div>
<div class="d g" style="left:232px;top:299px">22</div>
<div class="d" style="left:252px;top:299px">23</div>
<div class="d" style="left:132px;top:317px">24</div>
<div class="d g" style="left:152px;top:317px">25</div>
<div class="d g" style="left:172px;top:317px">26</div>
<div class="d g" style="left:192px;top:317px">27</div>
<div class="d g" style="left:212px;top:317px">28</div>
<div class="d g" style="left:232px;top:317px">29</div>
<div class="d" style="left:252px;top:317px">30</div>
<div class="d" style="left:132px;top:335px">31</div>
<div class="a" style="left:290px;top:205px;width:1px;height:19px;background:#8f8f98"></div><div class="a" style="left:291px;top:205px;width:1px;height:19px;background:#fff"></div>
<div class="m" style="left:291px;top:208px;width:168px">fevereiro de 2021</div>
<div class="h" style="left:309px;top:225px">D</div>
<div class="h" style="left:329px;top:225px">S</div>
<div class="h" style="left:349px;top:225px">T</div>
<div class="h" style="left:369px;top:225px">Q</div>
<div class="h" style="left:389px;top:225px">Q</div>
<div class="h" style="left:409px;top:225px">S</div>
<div class="h" style="left:429px;top:225px">S</div>
<div class="a" style="left:305px;top:242px;width:141px;height:1px;background:#000"></div>
<div class="d g" style="left:320px;top:245px">1</div>
<div class="d g" style="left:340px;top:245px">2</div>
<div class="d g" style="left:360px;top:245px">3</div>
<div class="d g" style="left:380px;top:245px">4</div>
<div class="d g" style="left:400px;top:245px">5</div>
<div class="d" style="left:420px;top:245px">6</div>
<div class="d" style="left:300px;top:263px">7</div>
<div class="d g" style="left:320px;top:263px">8</div>
<div class="d g" style="left:340px;top:263px">9</div>
<div class="d g" style="left:360px;top:263px">10</div>
<div class="d g" style="left:380px;top:263px">11</div>
<div class="d g" style="left:400px;top:263px">12</div>
<div class="d" style="left:420px;top:263px">13</div>
<div class="d" style="left:300px;top:281px">14</div>
<div class="d g" style="left:320px;top:281px">15</div>
<div class="d g" style="left:340px;top:281px">16</div>
<div class="d g" style="left:360px;top:281px">17</div>
<div class="d g" style="left:380px;top:281px">18</div>
<div class="d g" style="left:400px;top:281px">19</div>
<div class="d" style="left:420px;top:281px">20</div>
<div class="d" style="left:300px;top:299px">21</div>
<div class="d g" style="left:320px;top:299px">22</div>
<div class="d g" style="left:340px;top:299px">23</div>
<div class="d g" style="left:360px;top:299px">24</div>
<div class="d g" style="left:380px;top:299px">25</div>
<div class="d g" style="left:400px;top:299px">26</div>
<div class="d" style="left:420px;top:299px">27</div>
<div class="d" style="left:300px;top:317px">28</div>
<div class="a" style="left:458px;top:205px;width:1px;height:19px;background:#8f8f98"></div><div class="a" style="left:459px;top:205px;width:1px;height:19px;background:#fff"></div>
<div class="m" style="left:459px;top:208px;width:168px">março de 2021</div>
<div class="h" style="left:477px;top:225px">D</div>
<div class="h" style="left:497px;top:225px">S</div>
<div class="h" style="left:517px;top:225px">T</div>
<div class="h" style="left:537px;top:225px">Q</div>
<div class="h" style="left:557px;top:225px">Q</div>
<div class="h" style="left:577px;top:225px">S</div>
<div class="h" style="left:597px;top:225px">S</div>
<div class="a" style="left:473px;top:242px;width:141px;height:1px;background:#000"></div>
<div class="d g" style="left:488px;top:245px">1</div>
<div class="d g" style="left:508px;top:245px">2</div>
<div class="d g" style="left:528px;top:245px">3</div>
<div class="d g" style="left:548px;top:245px">4</div>
<div class="d g" style="left:568px;top:245px">5</div>
<div class="d" style="left:588px;top:245px">6</div>
<div class="d" style="left:468px;top:263px">7</div>
<div class="d g" style="left:488px;top:263px">8</div>
<div class="d g" style="left:508px;top:263px">9</div>
<div class="d g" style="left:528px;top:263px">10</div>
<div class="d g" style="left:548px;top:263px">11</div>
<div class="d g" style="left:568px;top:263px">12</div>
<div class="d" style="left:588px;top:263px">13</div>
<div class="d" style="left:468px;top:281px">14</div>
<div class="d g" style="left:488px;top:281px">15</div>
<div class="d g" style="left:508px;top:281px">16</div>
<div class="d g" style="left:528px;top:281px">17</div>
<div class="d g" style="left:548px;top:281px">18</div>
<div class="d g" style="left:568px;top:281px">19</div>
<div class="d" style="left:588px;top:281px">20</div>
<div class="d" style="left:468px;top:299px">21</div>
<div class="d g" style="left:488px;top:299px">22</div>
<div class="d g" style="left:508px;top:299px">23</div>
<div class="d g" style="left:528px;top:299px">24</div>
<div class="d g" style="left:548px;top:299px">25</div>
<div class="d g" style="left:568px;top:299px">26</div>
<div class="d" style="left:588px;top:299px">27</div>
<div class="d" style="left:468px;top:317px">28</div>
<div class="d g" style="left:488px;top:317px">29</div>
<div class="d g" style="left:508px;top:317px">30</div>
<div class="d g" style="left:528px;top:317px">31</div>
<div class="a" style="left:626px;top:205px;width:1px;height:19px;background:#8f8f98"></div><div class="a" style="left:627px;top:205px;width:1px;height:19px;background:#fff"></div>
<div class="m" style="left:627px;top:208px;width:168px">abril de 2021</div>
<div class="h" style="left:645px;top:225px">D</div>
<div class="h" style="left:665px;top:225px">S</div>
<div class="h" style="left:685px;top:225px">T</div>
<div class="h" style="left:705px;top:225px">Q</div>
<div class="h" style="left:725px;top:225px">Q</div>
<div class="h" style="left:745px;top:225px">S</div>
<div class="h" style="left:765px;top:225px">S</div>
<div class="a" style="left:641px;top:242px;width:141px;height:1px;background:#000"></div>
<div class="d g" style="left:716px;top:245px">1</div>
<div class="d g" style="left:736px;top:245px">2</div>
<div class="d" style="left:756px;top:245px">3</div>
<div class="d" style="left:636px;top:263px">4</div>
<div class="d g" style="left:656px;top:263px">5</div>
<div class="d g" style="left:676px;top:263px">6</div>
<div class="d g" style="left:696px;top:263px">7</div>
<div class="d g" style="left:716px;top:263px">8</div>
<div class="d g" style="left:736px;top:263px">9</div>
<div class="d" style="left:756px;top:263px">10</div>
<div class="d" style="left:636px;top:281px">11</div>
<div class="d g" style="left:656px;top:281px">12</div>
<div class="d g" style="left:676px;top:281px">13</div>
<div class="d g" style="left:696px;top:281px">14</div>
<div class="d g" style="left:716px;top:281px">15</div>
<div class="d g" style="left:736px;top:281px">16</div>
<div class="d" style="left:756px;top:281px">17</div>
<div class="d" style="left:636px;top:299px">18</div>
<div class="d g" style="left:656px;top:299px">19</div>
<div class="d g" style="left:676px;top:299px">20</div>
<div class="d g" style="left:696px;top:299px">21</div>
<div class="d g" style="left:716px;top:299px">22</div>
<div class="d g" style="left:736px;top:299px">23</div>
<div class="d" style="left:756px;top:299px">24</div>
<div class="d" style="left:636px;top:317px">25</div>
<div class="d g" style="left:656px;top:317px">26</div>
<div class="d g" style="left:676px;top:317px">27</div>
<div class="d g" style="left:696px;top:317px">28</div>
<div class="d g" style="left:716px;top:317px">29</div>
<div class="d g" style="left:736px;top:317px">30</div>
<div class="a" style="left:794px;top:205px;width:1px;height:19px;background:#8f8f98"></div><div class="a" style="left:795px;top:205px;width:1px;height:19px;background:#fff"></div>
<div class="m" style="left:795px;top:208px;width:168px">maio de 2021</div>
<div class="h" style="left:813px;top:225px">D</div>
<div class="h" style="left:833px;top:225px">S</div>
<div class="h" style="left:853px;top:225px">T</div>
<div class="h" style="left:873px;top:225px">Q</div>
<div class="h" style="left:893px;top:225px">Q</div>
<div class="h" style="left:913px;top:225px">S</div>
<div class="h" style="left:933px;top:225px">S</div>
<div class="a" style="left:809px;top:242px;width:141px;height:1px;background:#000"></div>
<div class="d" style="left:924px;top:245px">1</div>
<div class="d" style="left:804px;top:263px">2</div>
<div class="d g" style="left:824px;top:263px">3</div>
<div class="d g" style="left:844px;top:263px">4</div>
<div class="d g" style="left:864px;top:263px">5</div>
<div class="d g" style="left:884px;top:263px">6</div>
<div class="d g" style="left:904px;top:263px">7</div>
<div class="d" style="left:924px;top:263px">8</div>
<div class="d" style="left:804px;top:281px">9</div>
<div class="d g" style="left:824px;top:281px">10</div>
<div class="d g" style="left:844px;top:281px">11</div>
<div class="d g" style="left:864px;top:281px">12</div>
<div class="d g" style="left:884px;top:281px">13</div>
<div class="d g" style="left:904px;top:281px">14</div>
<div class="d" style="left:924px;top:281px">15</div>
<div class="d" style="left:804px;top:299px">16</div>
<div class="d" style="left:824px;top:299px">17</div>
<div class="d" style="left:844px;top:299px">18</div>
<div class="d" style="left:864px;top:299px">19</div>
<div class="d" style="left:884px;top:299px">20</div>
<div class="d" style="left:904px;top:299px">21</div>
<div class="d" style="left:924px;top:299px">22</div>
<div class="d" style="left:804px;top:317px">23</div>
<div class="d" style="left:824px;top:317px">24</div>
<div class="d" style="left:844px;top:317px">25</div>
<div class="d" style="left:864px;top:317px">26</div>
<div class="d" style="left:884px;top:317px">27</div>
<div class="d" style="left:904px;top:317px">28</div>
<div class="d" style="left:924px;top:317px">29</div>
<div class="d" style="left:804px;top:335px">30</div>
<div class="d" style="left:824px;top:335px">31</div>
<div class="a" style="left:962px;top:205px;width:1px;height:19px;background:#8f8f98"></div><div class="a" style="left:963px;top:205px;width:1px;height:19px;background:#fff"></div>
<div class="m" style="left:963px;top:208px;width:168px">junho de 2021</div>
<div class="h" style="left:981px;top:225px">D</div>
<div class="h" style="left:1001px;top:225px">S</div>
<div class="h" style="left:1021px;top:225px">T</div>
<div class="h" style="left:1041px;top:225px">Q</div>
<div class="h" style="left:1061px;top:225px">Q</div>
<div class="h" style="left:1081px;top:225px">S</div>
<div class="h" style="left:1101px;top:225px">S</div>
<div class="a" style="left:977px;top:242px;width:141px;height:1px;background:#000"></div>
<div class="d" style="left:1012px;top:245px">1</div>
<div class="d" style="left:1032px;top:245px">2</div>
<div class="d" style="left:1052px;top:245px">3</div>
<div class="d" style="left:1072px;top:245px">4</div>
<div class="d" style="left:1092px;top:245px">5</div>
<div class="d" style="left:972px;top:263px">6</div>
<div class="d" style="left:992px;top:263px">7</div>
<div class="d" style="left:1012px;top:263px">8</div>
<div class="d" style="left:1032px;top:263px">9</div>
<div class="d" style="left:1052px;top:263px">10</div>
<div class="d" style="left:1072px;top:263px">11</div>
<div class="d" style="left:1092px;top:263px">12</div>
<div class="d" style="left:972px;top:281px">13</div>
<div class="d" style="left:992px;top:281px">14</div>
<div class="d" style="left:1012px;top:281px">15</div>
<div class="d" style="left:1032px;top:281px">16</div>
<div class="d" style="left:1052px;top:281px">17</div>
<div class="d" style="left:1072px;top:281px">18</div>
<div class="d" style="left:1092px;top:281px">19</div>
<div class="d" style="left:972px;top:299px">20</div>
<div class="d" style="left:992px;top:299px">21</div>
<div class="d" style="left:1012px;top:299px">22</div>
<div class="d" style="left:1032px;top:299px">23</div>
<div class="d" style="left:1052px;top:299px">24</div>
<div class="d" style="left:1072px;top:299px">25</div>
<div class="d" style="left:1092px;top:299px">26</div>
<div class="d" style="left:972px;top:317px">27</div>
<div class="d" style="left:992px;top:317px">28</div>
<div class="d" style="left:1012px;top:317px">29</div>
<div class="d" style="left:1032px;top:317px">30</div>
<div class="a" style="left:1130px;top:205px;width:1px;height:19px;background:#8f8f98"></div><div class="a" style="left:1131px;top:205px;width:1px;height:19px;background:#fff"></div>
<div class="m" style="left:1131px;top:208px;width:168px">julho de 2021</div>
<div class="h" style="left:1149px;top:225px">D</div>
<div class="h" style="left:1169px;top:225px">S</div>
<div class="h" style="left:1189px;top:225px">T</div>
<div class="h" style="left:1209px;top:225px">Q</div>
<div class="h" style="left:1229px;top:225px">Q</div>
<div class="h" style="left:1249px;top:225px">S</div>
<div class="h" style="left:1269px;top:225px">S</div>
<div class="a" style="left:1145px;top:242px;width:141px;height:1px;background:#000"></div>
<div class="d" style="left:1220px;top:245px">1</div>
<div class="d" style="left:1240px;top:245px">2</div>
<div class="d" style="left:1260px;top:245px">3</div>
<div class="d" style="left:1140px;top:263px">4</div>
<div class="d" style="left:1160px;top:263px">5</div>
<div class="d" style="left:1180px;top:263px">6</div>
<div class="d" style="left:1200px;top:263px">7</div>
<div class="d" style="left:1220px;top:263px">8</div>
<div class="d" style="left:1240px;top:263px">9</div>
<div class="d" style="left:1260px;top:263px">10</div>
<div class="d" style="left:1140px;top:281px">11</div>
<div class="d" style="left:1160px;top:281px">12</div>
<div class="d" style="left:1180px;top:281px">13</div>
<div class="d" style="left:1200px;top:281px">14</div>
<div class="d" style="left:1220px;top:281px">15</div>
<div class="d" style="left:1240px;top:281px">16</div>
<div class="d" style="left:1260px;top:281px">17</div>
<div class="d" style="left:1140px;top:299px">18</div>
<div class="d" style="left:1160px;top:299px">19</div>
<div class="d" style="left:1180px;top:299px">20</div>
<div class="d" style="left:1200px;top:299px">21</div>
<div class="d" style="left:1220px;top:299px">22</div>
<div class="d" style="left:1240px;top:299px">23</div>
<div class="d" style="left:1260px;top:299px">24</div>
<div class="d" style="left:1140px;top:317px">25</div>
<div class="d" style="left:1160px;top:317px">26</div>
<div class="d" style="left:1180px;top:317px">27</div>
<div class="d" style="left:1200px;top:317px">28</div>
<div class="d" style="left:1220px;top:317px">29</div>
<div class="d" style="left:1240px;top:317px">30</div>
<div class="d" style="left:1260px;top:317px">31</div>
<div class="a" style="left:1298px;top:205px;width:1px;height:19px;background:#8f8f98"></div><div class="a" style="left:1299px;top:205px;width:1px;height:19px;background:#fff"></div>
<div class="m" style="left:1299px;top:208px;width:168px">agosto de 2021</div>
<div class="h" style="left:1317px;top:225px">D</div>
<div class="h" style="left:1337px;top:225px">S</div>
<div class="h" style="left:1357px;top:225px">T</div>
<div class="h" style="left:1377px;top:225px">Q</div>
<div class="h" style="left:1397px;top:225px">Q</div>
<div class="h" style="left:1417px;top:225px">S</div>
<div class="h" style="left:1437px;top:225px">S</div>
<div class="a" style="left:1313px;top:242px;width:141px;height:1px;background:#000"></div>
<div class="d" style="left:1308px;top:245px">1</div>
<div class="d" style="left:1328px;top:245px">2</div>
<div class="d" style="left:1348px;top:245px">3</div>
<div class="d" style="left:1368px;top:245px">4</div>
<div class="d" style="left:1388px;top:245px">5</div>
<div class="d" style="left:1408px;top:245px">6</div>
<div class="d" style="left:1428px;top:245px">7</div>
<div class="d" style="left:1308px;top:263px">8</div>
<div class="d" style="left:1328px;top:263px">9</div>
<div class="d" style="left:1348px;top:263px">10</div>
<div class="d" style="left:1368px;top:263px">11</div>
<div class="d" style="left:1388px;top:263px">12</div>
<div class="d" style="left:1408px;top:263px">13</div>
<div class="d" style="left:1428px;top:263px">14</div>
<div class="d" style="left:1308px;top:281px">15</div>
<div class="d" style="left:1328px;top:281px">16</div>
<div class="d" style="left:1348px;top:281px">17</div>
<div class="d" style="left:1368px;top:281px">18</div>
<div class="d" style="left:1388px;top:281px">19</div>
<div class="d" style="left:1408px;top:281px">20</div>
<div class="d" style="left:1428px;top:281px">21</div>
<div class="d" style="left:1308px;top:299px">22</div>
<div class="d" style="left:1328px;top:299px">23</div>
<div class="d" style="left:1348px;top:299px">24</div>
<div class="d" style="left:1368px;top:299px">25</div>
<div class="d" style="left:1388px;top:299px">26</div>
<div class="d" style="left:1408px;top:299px">27</div>
<div class="d" style="left:1428px;top:299px">28</div>
<div class="d" style="left:1308px;top:317px">29</div>
<div class="d" style="left:1328px;top:317px">30</div>
<div class="d" style="left:1348px;top:317px">31</div>
<div class="d" style="left:1368px;top:317px">1</div>
<div class="d" style="left:1388px;top:317px">2</div>
<div class="d" style="left:1408px;top:317px">3</div>
<div class="d" style="left:1428px;top:317px">4</div>
<div class="d" style="left:1308px;top:335px">5</div>
<div class="d" style="left:1328px;top:335px">6</div>
<div class="d" style="left:1348px;top:335px">7</div>
<div class="d" style="left:1368px;top:335px">8</div>
<div class="d" style="left:1388px;top:335px">9</div>
<div class="d" style="left:1408px;top:335px">10</div>
<div class="d" style="left:1428px;top:335px">11</div>
<div class="a" style="left:219px;top:282px;width:20px;height:17px;border:1px solid #c08a3c;border-radius:2px;background:linear-gradient(#fbd9a0,#f7b455 55%,#fde0b0);box-shadow:inset 0 0 0 1px #fce8c6"></div>
<div class="a" style="left:239px;top:282px;width:20px;height:17px;border:1px solid #d8c98a;border-radius:2px;background:linear-gradient(#fffbe0,#fdf0b0)"></div>
<div class="d" style="left:212px;top:281px;color:#000;letter-spacing:-.2px">14</div>
<div class="d g" style="left:233px;top:281px;font-weight:bold;text-decoration:underline;letter-spacing:-.6px">15</div>
</div>
<svg class="a" style="left:128px;top:209px" width="8" height="12" viewBox="0 0 8 12"><path d="M7.5 0.5V11.5L1 6Z" fill="#000"/></svg>
<svg class="a" style="left:1453px;top:209px" width="8" height="12" viewBox="0 0 8 12"><path d="M0.5 0.5V11.5L7 6Z" fill="#000"/></svg>
<div class="a" style="left:4px;top:360px;width:1909px;height:1px;background:#fbfbfb"></div>
<div class="a" style="left:1587px;top:198px;width:77px;height:162px;background:#fff;border-left:1px solid #b4b4b8"></div>
<div class="t" style="left:1592px;top:200px"><span class="x">Legenda</span></div>
<svg class="a" style="left:1591px;top:217px" width="10" height="10" viewBox="0 0 10 10"><circle cx="5" cy="5" r="3.6" fill="#808080"/><path d="M5 0.2L6 2.4L8.4 1.6L7.6 4L9.8 5L7.6 6L8.4 8.4L6 7.6L5 9.8L4 7.6L1.6 8.4L2.4 6L0.2 5L2.4 4L1.6 1.6L4 2.4Z" fill="#808080"/></svg>
<svg class="a" style="left:1591px;top:232px" width="10" height="10" viewBox="0 0 10 10"><circle cx="5" cy="5" r="3.6" fill="#008000"/><path d="M5 0.2L6 2.4L8.4 1.6L7.6 4L9.8 5L7.6 6L8.4 8.4L6 7.6L5 9.8L4 7.6L1.6 8.4L2.4 6L0.2 5L2.4 4L1.6 1.6L4 2.4Z" fill="#008000"/></svg>
<svg class="a" style="left:1591px;top:244px" width="10" height="10" viewBox="0 0 10 10"><circle cx="5" cy="5" r="3.6" fill="#800000"/><path d="M5 0.2L6 2.4L8.4 1.6L7.6 4L9.8 5L7.6 6L8.4 8.4L6 7.6L5 9.8L4 7.6L1.6 8.4L2.4 6L0.2 5L2.4 4L1.6 1.6L4 2.4Z" fill="#800000"/></svg>
<div class="t" style="left:1604px;top:216px;letter-spacing:-.05px"><span class="x">Não Atende</span></div>
<div class="t" style="left:1604px;top:231px"><span class="x">Livre</span></div>
<div class="t" style="left:1605px;top:243px"><span class="x">Ocupada</span></div>
<div class="a" style="left:1663px;top:198px;width:250px;height:162px;border-left:1px solid #dcdcdc;border-bottom:1px solid #fff"></div>
<div class="t" style="left:1671px;top:199px;font-weight:bold;font-size:12px;letter-spacing:-.15px">Opções Extras</div>
<div class="bb" style="left:1666px;top:217px;width:115px;height:21px"></div>
<div class="t" style="left:1580px;top:217px;width:300px;text-align:center;line-height:23px;font-weight:bold;font-size:12px;letter-spacing:-.03px">Recepção</div>
<div class="bb" style="left:1783px;top:217px;width:128px;height:21px"></div>
<div class="t" style="left:1697px;top:217px;width:300px;text-align:center;line-height:23px;font-weight:bold;font-size:12px;letter-spacing:-.03px">Meus Proc. em Aberto</div>
<div class="bb" style="left:1666px;top:240px;width:130px;height:21px"></div>
<div class="t" style="left:1588.5px;top:240px;width:300px;text-align:center;line-height:23px;font-weight:bold;font-size:12px;letter-spacing:-.03px">Chamar Senha (F8)</div>
<div class="bb" style="left:1798px;top:240px;width:113px;height:21px"></div>
<div class="t" style="left:1712px;top:240px;width:300px;text-align:center;line-height:23px;font-weight:bold;font-size:12px;letter-spacing:-.03px">Chamar Paciente</div>
<div class="bb" style="left:1666px;top:264px;width:245px;height:21px"></div>
<div class="t" style="left:1645px;top:264px;width:300px;text-align:center;line-height:23px;font-weight:bold;font-size:12px;letter-spacing:-.03px">Atestados</div>
<div class="bb" style="left:1666px;top:288px;width:245px;height:22px"></div>
<div class="t" style="left:1630px;top:288px;width:300px;text-align:center;line-height:24px;font-weight:bold;font-size:12px;letter-spacing:-.03px">Atendimentos (Ficha Médica)</div>
<div class="bb" style="left:1666px;top:313px;width:130px;height:20px"></div>
<div class="t" style="left:1581px;top:313px;width:300px;text-align:center;line-height:22px;font-weight:bold;font-size:12px;letter-spacing:-.03px">Triagem</div>
<div class="bb" style="left:1798px;top:313px;width:113px;height:20px"></div>
<div class="t" style="left:1711.5px;top:313px;width:300px;text-align:center;line-height:22px;font-weight:bold;font-size:12px;letter-spacing:-.03px">Imp. Etiqueta</div>
<div class="bb" style="left:1666px;top:336px;width:245px;height:20px"></div>
<div class="t" style="left:1637.5px;top:336px;width:300px;text-align:center;line-height:22px;font-weight:bold;font-size:12px;letter-spacing:-.03px">Lançar Procedimentos (Exames)</div>
<div class="a" style="left:1896px;top:291px;width:1px;height:16px;background:#555"></div>
<svg class="a" style="left:1899px;top:296px" width="9" height="6" viewBox="0 0 9 6"><path d="M0 0.5H9L4.5 5.5Z" fill="#000"/></svg>
<svg class="a" style="left:1668px;top:219px" width="16" height="17" viewBox="0 0 16 17"><path d="M1 2H6L7 1H11L12 2H13V12H1Z" fill="#ecd28a" stroke="#b39244" stroke-width=".6"/><circle cx="5" cy="7" r="2.2" fill="#e9c79c"/><ellipse cx="5" cy="12.5" rx="3.8" ry="2.8" fill="#ececee" stroke="#aaa" stroke-width=".4"/><path d="M6.5 11Q6.3 6.8 9.4 6.8Q12.4 6.8 12.2 11Z" fill="#2a1d18"/><ellipse cx="9.4" cy="9.6" rx="1.7" ry="2" fill="#c89a74"/><ellipse cx="9.3" cy="14" rx="3.8" ry="2.6" fill="#f3e7e7" stroke="#b9a6a6" stroke-width=".4"/></svg>
<svg class="a" style="left:1669px;top:244px" width="14" height="14" viewBox="0 0 14 14"><path d="M1 5.5L7 3.5L7.5 13L1.5 12.5Z" fill="#2f7fe4"/><path d="M1 5.5L5 2.5L10 2L7 3.5Z" fill="#8cc0f8"/><path d="M7 3.5L10 2L10 4L13.5 6.5L10.5 9.5L10.3 11L7.5 13Z" fill="#3d93f2"/><path d="M8.6 5.2L11.8 6.6L9.2 8.9Z" fill="#cfe6ff"/></svg>
<svg class="a" style="left:1801px;top:244px" width="14" height="14" viewBox="0 0 14 14"><path d="M1 5.5L7 3.5L7.5 13L1.5 12.5Z" fill="#2f7fe4"/><path d="M1 5.5L5 2.5L10 2L7 3.5Z" fill="#8cc0f8"/><path d="M7 3.5L10 2L10 4L13.5 6.5L10.5 9.5L10.3 11L7.5 13Z" fill="#3d93f2"/><path d="M8.6 5.2L11.8 6.6L9.2 8.9Z" fill="#cfe6ff"/></svg>
<svg class="a" style="left:1669px;top:266px" width="15" height="17" viewBox="0 0 15 17"><path d="M1.5 2.5L10 1L13.5 3V15.5H1.5Z" fill="#f4f4f4" stroke="#8d8d8d" stroke-width=".9"/><path d="M10 1V3.5H13.5" fill="none" stroke="#8d8d8d" stroke-width=".7"/><path d="M3.5 5.5H11.5M3.5 7.5H11.5M3.5 9.5H8M6 12.5L8 11L10 12" stroke="#9a9a9a" stroke-width=".8" fill="none"/></svg>
<svg class="a" style="left:1800px;top:316px" width="15" height="14" viewBox="0 0 15 14"><path d="M5 1.5L10 0.5L11 4.5L5.5 5.5Z" fill="#f2f2f2" stroke="#888" stroke-width=".5"/><path d="M1 7.5L4.5 4.5L12 4L13.8 6.5V11L10 13L1 11Z" fill="#5a5e66"/><path d="M1 7.5L10 9L13.8 6.5" stroke="#9aa0aa" stroke-width=".7" fill="none"/><path d="M3 9.5L9 10.6V12.6L3 11.4Z" fill="#e9e9ea"/><path d="M5.5 5L10.5 4.4" stroke="#d8d8d8" stroke-width="1"/></svg>
<div class="a" style="left:5px;top:368px;width:13px;height:13px;background:#fff;border:1px solid #333"></div><svg class="a" style="left:5px;top:368px" width="13" height="13" viewBox="0 0 13 13"><path d="M2.8 6.5L5.3 9.2L10.4 3.4" stroke="#555" stroke-width="1.1" fill="none"/></svg>
<div class="a" style="left:150px;top:368px;width:13px;height:13px;background:#fff;border:1px solid #333"></div>
<div class="t" style="left:21px;top:369px;letter-spacing:-.22px"><span class="x">Mostrar Todos os Horários</span></div>
<div class="t" style="left:166px;top:369px;letter-spacing:-.25px"><span class="x">Agendamentos de outras unidades</span></div>
<div class="btn" style="left:336px;top:363px;width:140px;height:24px;line-height:24px"><span class="x">Observação do Dia</span></div>
<div class="t" style="left:821px;top:362.5px;font-weight:bold;color:#ff0000;letter-spacing:.58px"><span class="x" style="transform:scaleY(1.12)"><span style="letter-spacing:1.16px">15/01/2021</span> Sexta-feira - Agendado(s): 04 - Bloqueado(s): 00 - Encaixado(s): 00 - Vaga(s) Livre(s): 16 - Taxa de Ocupação: 23,81%</span></div>
<div class="a" style="left:5px;top:388px;width:1908px;height:579px;border-left:1px solid #767a84;border-top:1px solid #c4c6cc;border-bottom:2px solid #9a9ea8;background:#f0f0f0"></div>
<div class="a" style="left:5px;top:389px;width:1908px;height:2px;background:#858a94"></div>
<div class="a" style="left:0;top:391px;width:1912px;height:19px">
<div class="gh" style="left:6px;width:11px;padding:0;"></div>
<div class="gh" style="left:17px;width:64px;padding-left:3px;"><span class="x">Prioridade</span></div>
<div class="gh" style="left:81px;width:51px;padding-left:3px;"><span class="x">Hora</span></div>
<div class="gh" style="left:132px;width:174px;padding-left:3px;"><span class="x">Situação (Status)</span></div>
<div class="gh" style="left:306px;width:184px;padding-left:3px;"><span class="x">Convênio</span></div>
<div class="gh" style="left:490px;width:64px;padding-left:3px;"><span class="x">Nro. Ficha</span></div>
<div class="gh" style="left:554px;width:321px;padding-left:3px;"><span class="x">Nome do Paciente</span></div>
<div class="gh" style="left:875px;width:85px;padding-left:3px;"><span class="x">Dt. Nascimento</span></div>
<div class="gh" style="left:960px;width:175px;padding-left:3px;"><span class="x">Médico</span></div>
<div class="gh" style="left:1135px;width:123px;padding-left:3px;"><span class="x">Observações</span></div>
<div class="gh" style="left:1258px;width:91px;padding-left:3px;"><span class="x">Confirma</span></div>
<div class="gh" style="left:1349px;width:111px;padding-left:3px;"><span class="x">Hora do Atendimento</span></div>
<div class="gh" style="left:1460px;width:300px;padding-left:3px;"><span class="x">Exames</span></div>
<div class="gh" style="left:1760px;width:153px;padding-left:3px;"><span class="x">Data e Hora da inclusão</span></div>
</div>
<div class="a" style="left:5px;top:410px;width:1907px;height:1px;background:#767a84"></div>
<div class="t" style="left:7px;top:394px;color:#5a5a9a;font-size:10px">✳</div>
<svg class="a" style="left:114px;top:395.5px" width="10" height="6" viewBox="0 0 10 6"><path d="M0 5.5L5 0.5L10 5.5Z" fill="#5b5b8c"/></svg>
<div class="a" style="left:6px;top:411px;width:11px;height:19px;background:linear-gradient(#fdfdfe,#f0f0f3 50%,#d6d7de);border-right:1px solid #767a84;border-bottom:1px solid #767a84"></div>
<div class="row" style="top:411px;height:19px;line-height:18px">
<div class="vl" style="left:63px;top:0;height:19px;background:#e3e6e6"></div>
<div class="vl" style="left:114px;top:0;height:19px;background:#e3e6e6"></div>
<div class="vl" style="left:288px;top:0;height:19px;background:#e3e6e6"></div>
<div class="vl" style="left:472px;top:0;height:19px;background:#e3e6e6"></div>
<div class="vl" style="left:536px;top:0;height:19px;background:#e3e6e6"></div>
<div class="vl" style="left:857px;top:0;height:19px;background:#e3e6e6"></div>
<div class="vl" style="left:942px;top:0;height:19px;background:#e3e6e6"></div>
<div class="vl" style="left:1117px;top:0;height:19px;background:#e3e6e6"></div>
<div class="vl" style="left:1240px;top:0;height:19px;background:#e3e6e6"></div>
<div class="vl" style="left:1331px;top:0;height:19px;background:#e3e6e6"></div>
<div class="vl" style="left:1442px;top:0;height:19px;background:#e3e6e6"></div>
<div class="vl" style="left:1742px;top:0;height:19px;background:#e3e6e6"></div>
<div class="c" style="left:66px"><span class="x">08:00</span></div>
</div>
<div class="a" style="left:6px;top:430px;width:11px;height:19px;background:linear-gradient(#fdfdfe,#f0f0f3 50%,#d6d7de);border-right:1px solid #767a84;border-bottom:1px solid #767a84"></div>
<div class="row" style="top:430px;height:19px;line-height:18px">
<div class="vl" style="left:63px;top:0;height:19px;background:#e3e6e6"></div>
<div class="vl" style="left:114px;top:0;height:19px;background:#e3e6e6"></div>
<div class="vl" style="left:288px;top:0;height:19px;background:#e3e6e6"></div>
<div class="vl" style="left:472px;top:0;height:19px;background:#e3e6e6"></div>
<div class="vl" style="left:536px;top:0;height:19px;background:#e3e6e6"></div>
<div class="vl" style="left:857px;top:0;height:19px;background:#e3e6e6"></div>
<div class="vl" style="left:942px;top:0;height:19px;background:#e3e6e6"></div>
<div class="vl" style="left:1117px;top:0;height:19px;background:#e3e6e6"></div>
<div class="vl" style="left:1240px;top:0;height:19px;background:#e3e6e6"></div>
<div class="vl" style="left:1331px;top:0;height:19px;background:#e3e6e6"></div>
<div class="vl" style="left:1442px;top:0;height:19px;background:#e3e6e6"></div>
<div class="vl" style="left:1742px;top:0;height:19px;background:#e3e6e6"></div>
<div class="c" style="left:66px"><span class="x">08:30</span></div>
</div>
<div class="a" style="left:6px;top:449px;width:11px;height:19px;background:linear-gradient(#fdfdfe,#f0f0f3 50%,#d6d7de);border-right:1px solid #767a84;border-bottom:1px solid #767a84"></div>
<div class="row" style="top:449px;height:19px;line-height:18px">
<div class="vl" style="left:63px;top:0;height:19px;background:#e3e6e6"></div>
<div class="vl" style="left:114px;top:0;height:19px;background:#e3e6e6"></div>
<div class="vl" style="left:288px;top:0;height:19px;background:#e3e6e6"></div>
<div class="vl" style="left:472px;top:0;height:19px;background:#e3e6e6"></div>
<div class="vl" style="left:536px;top:0;height:19px;background:#e3e6e6"></div>
<div class="vl" style="left:857px;top:0;height:19px;background:#e3e6e6"></div>
<div class="vl" style="left:942px;top:0;height:19px;background:#e3e6e6"></div>
<div class="vl" style="left:1117px;top:0;height:19px;background:#e3e6e6"></div>
<div class="vl" style="left:1240px;top:0;height:19px;background:#e3e6e6"></div>
<div class="vl" style="left:1331px;top:0;height:19px;background:#e3e6e6"></div>
<div class="vl" style="left:1442px;top:0;height:19px;background:#e3e6e6"></div>
<div class="vl" style="left:1742px;top:0;height:19px;background:#e3e6e6"></div>
<div class="c" style="left:66px"><span class="x">09:00</span></div>
</div>
<div class="a" style="left:6px;top:468px;width:11px;height:19px;background:linear-gradient(#fdfdfe,#f0f0f3 50%,#d6d7de);border-right:1px solid #767a84;border-bottom:1px solid #767a84"></div>
<div class="row" style="top:468px;height:19px;line-height:18px">
<div class="vl" style="left:63px;top:0;height:19px;background:#e3e6e6"></div>
<div class="vl" style="left:114px;top:0;height:19px;background:#e3e6e6"></div>
<div class="vl" style="left:288px;top:0;height:19px;background:#e3e6e6"></div>
<div class="vl" style="left:472px;top:0;height:19px;background:#e3e6e6"></div>
<div class="vl" style="left:536px;top:0;height:19px;background:#e3e6e6"></div>
<div class="vl" style="left:857px;top:0;height:19px;background:#e3e6e6"></div>
<div class="vl" style="left:942px;top:0;height:19px;background:#e3e6e6"></div>
<div class="vl" style="left:1117px;top:0;height:19px;background:#e3e6e6"></div>
<div class="vl" style="left:1240px;top:0;height:19px;background:#e3e6e6"></div>
<div class="vl" style="left:1331px;top:0;height:19px;background:#e3e6e6"></div>
<div class="vl" style="left:1442px;top:0;height:19px;background:#e3e6e6"></div>
<div class="vl" style="left:1742px;top:0;height:19px;background:#e3e6e6"></div>
<div class="c" style="left:66px"><span class="x">09:30</span></div>
</div>
<div class="a" style="left:6px;top:487px;width:11px;height:19px;background:linear-gradient(#fdfdfe,#f0f0f3 50%,#d6d7de);border-right:1px solid #767a84;border-bottom:1px solid #767a84"></div>
<div class="row" style="top:487px;height:19px;line-height:18px">
<div class="vl" style="left:63px;top:0;height:19px;background:#e3e6e6"></div>
<div class="vl" style="left:114px;top:0;height:19px;background:#e3e6e6"></div>
<div class="vl" style="left:288px;top:0;height:19px;background:#e3e6e6"></div>
<div class="vl" style="left:472px;top:0;height:19px;background:#e3e6e6"></div>
<div class="vl" style="left:536px;top:0;height:19px;background:#e3e6e6"></div>
<div class="vl" style="left:857px;top:0;height:19px;background:#e3e6e6"></div>
<div class="vl" style="left:942px;top:0;height:19px;background:#e3e6e6"></div>
<div class="vl" style="left:1117px;top:0;height:19px;background:#e3e6e6"></div>
<div class="vl" style="left:1240px;top:0;height:19px;background:#e3e6e6"></div>
<div class="vl" style="left:1331px;top:0;height:19px;background:#e3e6e6"></div>
<div class="vl" style="left:1442px;top:0;height:19px;background:#e3e6e6"></div>
<div class="vl" style="left:1742px;top:0;height:19px;background:#e3e6e6"></div>
<div class="c" style="left:66px"><span class="x">10:00</span></div>
</div>
<div class="a" style="left:6px;top:506px;width:11px;height:19px;background:linear-gradient(#fdfdfe,#f0f0f3 50%,#d6d7de);border-right:1px solid #767a84;border-bottom:1px solid #767a84"></div>
<div class="row" style="top:506px;height:19px;line-height:18px">
<div class="vl" style="left:63px;top:0;height:19px;background:#e3e6e6"></div>
<div class="vl" style="left:114px;top:0;height:19px;background:#e3e6e6"></div>
<div class="vl" style="left:288px;top:0;height:19px;background:#e3e6e6"></div>
<div class="vl" style="left:472px;top:0;height:19px;background:#e3e6e6"></div>
<div class="vl" style="left:536px;top:0;height:19px;background:#e3e6e6"></div>
<div class="vl" style="left:857px;top:0;height:19px;background:#e3e6e6"></div>
<div class="vl" style="left:942px;top:0;height:19px;background:#e3e6e6"></div>
<div class="vl" style="left:1117px;top:0;height:19px;background:#e3e6e6"></div>
<div class="vl" style="left:1240px;top:0;height:19px;background:#e3e6e6"></div>
<div class="vl" style="left:1331px;top:0;height:19px;background:#e3e6e6"></div>
<div class="vl" style="left:1442px;top:0;height:19px;background:#e3e6e6"></div>
<div class="vl" style="left:1742px;top:0;height:19px;background:#e3e6e6"></div>
<div class="c" style="left:66px"><span class="x">10:30</span></div>
</div>
<div class="a" style="left:6px;top:525px;width:11px;height:19px;background:linear-gradient(#fdfdfe,#f0f0f3 50%,#d6d7de);border-right:1px solid #767a84;border-bottom:1px solid #767a84"></div>
<div class="row" style="top:525px;height:19px;line-height:18px">
<div class="vl" style="left:63px;top:0;height:19px;background:#e3e6e6"></div>
<div class="vl" style="left:114px;top:0;height:19px;background:#e3e6e6"></div>
<div class="vl" style="left:288px;top:0;height:19px;background:#e3e6e6"></div>
<div class="vl" style="left:472px;top:0;height:19px;background:#e3e6e6"></div>
<div class="vl" style="left:536px;top:0;height:19px;background:#e3e6e6"></div>
<div class="vl" style="left:857px;top:0;height:19px;background:#e3e6e6"></div>
<div class="vl" style="left:942px;top:0;height:19px;background:#e3e6e6"></div>
<div class="vl" style="left:1117px;top:0;height:19px;background:#e3e6e6"></div>
<div class="vl" style="left:1240px;top:0;height:19px;background:#e3e6e6"></div>
<div class="vl" style="left:1331px;top:0;height:19px;background:#e3e6e6"></div>
<div class="vl" style="left:1442px;top:0;height:19px;background:#e3e6e6"></div>
<div class="vl" style="left:1742px;top:0;height:19px;background:#e3e6e6"></div>
<div class="c" style="left:66px"><span class="x">11:00</span></div>
</div>
<div class="a" style="left:6px;top:544px;width:11px;height:19px;background:linear-gradient(#fdfdfe,#f0f0f3 50%,#d6d7de);border-right:1px solid #767a84;border-bottom:1px solid #767a84"></div>
<div class="row" style="top:544px;height:19px;line-height:18px">
<div class="vl" style="left:63px;top:0;height:19px;background:#e3e6e6"></div>
<div class="vl" style="left:114px;top:0;height:19px;background:#e3e6e6"></div>
<div class="vl" style="left:288px;top:0;height:19px;background:#e3e6e6"></div>
<div class="vl" style="left:472px;top:0;height:19px;background:#e3e6e6"></div>
<div class="vl" style="left:536px;top:0;height:19px;background:#e3e6e6"></div>
<div class="vl" style="left:857px;top:0;height:19px;background:#e3e6e6"></div>
<div class="vl" style="left:942px;top:0;height:19px;background:#e3e6e6"></div>
<div class="vl" style="left:1117px;top:0;height:19px;background:#e3e6e6"></div>
<div class="vl" style="left:1240px;top:0;height:19px;background:#e3e6e6"></div>
<div class="vl" style="left:1331px;top:0;height:19px;background:#e3e6e6"></div>
<div class="vl" style="left:1442px;top:0;height:19px;background:#e3e6e6"></div>
<div class="vl" style="left:1742px;top:0;height:19px;background:#e3e6e6"></div>
<div class="c" style="left:66px"><span class="x">11:30</span></div>
</div>
<div class="a" style="left:6px;top:563px;width:11px;height:33px;background:linear-gradient(#fdfdfe,#f0f0f3 50%,#d6d7de);border-right:1px solid #767a84;border-bottom:1px solid #767a84"></div>
<div class="row hl" style="top:563px;height:33px;line-height:32px">
<div class="vl" style="left:63px;top:0;height:33px;background:#e2e6ee"></div>
<div class="vl" style="left:114px;top:0;height:33px;background:#e2e6ee"></div>
<div class="vl" style="left:288px;top:0;height:33px;background:#e2e6ee"></div>
<div class="vl" style="left:472px;top:0;height:33px;background:#e2e6ee"></div>
<div class="vl" style="left:536px;top:0;height:33px;background:#e2e6ee"></div>
<div class="vl" style="left:857px;top:0;height:33px;background:#e2e6ee"></div>
<div class="vl" style="left:942px;top:0;height:33px;background:#e2e6ee"></div>
<div class="vl" style="left:1117px;top:0;height:33px;background:#e2e6ee"></div>
<div class="vl" style="left:1240px;top:0;height:33px;background:#e2e6ee"></div>
<div class="vl" style="left:1331px;top:0;height:33px;background:#e2e6ee"></div>
<div class="vl" style="left:1442px;top:0;height:33px;background:#e2e6ee"></div>
<div class="vl" style="left:1742px;top:0;height:33px;background:#e2e6ee"></div>
<div class="c" style="left:0;width:63px;background:#c0c0c0;color:#000;padding-left:2px"><span class="x">NORMAL</span></div>
<div class="c" style="left:66px"><span class="x">12:00</span></div>
<div class="a" style="left:118px;top:8px;width:16px;height:16px;border-radius:50%;background:#9adbe8;border:1px dashed #b4e4ee"></div>
<div class="c" style="left:114px;width:172px;text-align:right;letter-spacing:-.2px"><span class="x">Agendado</span></div>
<div class="c" style="left:291px"><span class="x">PARTICULAR</span></div>
<div class="c" style="left:472px;width:62px;text-align:right"><span class="x">318075</span></div>
<div class="c" style="left:539px"><span class="x">TESTE DE SISTEMA</span></div>
<div class="c" style="left:860px;letter-spacing:.2px"><span class="x">31/01/1972</span></div>
<div class="c" style="left:1445px;line-height:14px;top:2px;letter-spacing:-.25px"><span class="x">TC ABDOME TOTAL (30min)</span><br><span class="x">TC TORAX (30min)</span></div>
<div class="c" style="left:1745px;letter-spacing:.1px"><span class="x">14/01/2021 08:51:06</span></div>
</div>
<div class="a" style="left:6px;top:596px;width:11px;height:19px;background:linear-gradient(#fdfdfe,#f0f0f3 50%,#d6d7de);border-right:1px solid #767a84;border-bottom:1px solid #767a84"></div>
<div class="row hl" style="top:596px;height:19px;line-height:18px">
<div class="vl" style="left:63px;top:0;height:19px;background:#e2e6ee"></div>
<div class="vl" style="left:114px;top:0;height:19px;background:#e2e6ee"></div>
<div class="vl" style="left:288px;top:0;height:19px;background:#e2e6ee"></div>
<div class="vl" style="left:472px;top:0;height:19px;background:#e2e6ee"></div>
<div class="vl" style="left:536px;top:0;height:19px;background:#e2e6ee"></div>
<div class="vl" style="left:857px;top:0;height:19px;background:#e2e6ee"></div>
<div class="vl" style="left:942px;top:0;height:19px;background:#e2e6ee"></div>
<div class="vl" style="left:1117px;top:0;height:19px;background:#e2e6ee"></div>
<div class="vl" style="left:1240px;top:0;height:19px;background:#e2e6ee"></div>
<div class="vl" style="left:1331px;top:0;height:19px;background:#e2e6ee"></div>
<div class="vl" style="left:1442px;top:0;height:19px;background:#e2e6ee"></div>
<div class="vl" style="left:1742px;top:0;height:19px;background:#e2e6ee"></div>
<div class="c" style="left:66px"><span class="x">12:30</span></div>
</div>
<div class="a" style="left:6px;top:615px;width:11px;height:19px;background:linear-gradient(#fdfdfe,#f0f0f3 50%,#d6d7de);border-right:1px solid #767a84;border-bottom:1px solid #767a84"></div>
<div class="row" style="top:615px;height:19px;line-height:18px">
<div class="vl" style="left:63px;top:0;height:19px;background:#e3e6e6"></div>
<div class="vl" style="left:114px;top:0;height:19px;background:#e3e6e6"></div>
<div class="vl" style="left:288px;top:0;height:19px;background:#e3e6e6"></div>
<div class="vl" style="left:472px;top:0;height:19px;background:#e3e6e6"></div>
<div class="vl" style="left:536px;top:0;height:19px;background:#e3e6e6"></div>
<div class="vl" style="left:857px;top:0;height:19px;background:#e3e6e6"></div>
<div class="vl" style="left:942px;top:0;height:19px;background:#e3e6e6"></div>
<div class="vl" style="left:1117px;top:0;height:19px;background:#e3e6e6"></div>
<div class="vl" style="left:1240px;top:0;height:19px;background:#e3e6e6"></div>
<div class="vl" style="left:1331px;top:0;height:19px;background:#e3e6e6"></div>
<div class="vl" style="left:1442px;top:0;height:19px;background:#e3e6e6"></div>
<div class="vl" style="left:1742px;top:0;height:19px;background:#e3e6e6"></div>
<div class="c" style="left:66px"><span class="x">13:00</span></div>
</div>
<div class="a" style="left:6px;top:634px;width:11px;height:19px;background:linear-gradient(#fdfdfe,#f0f0f3 50%,#d6d7de);border-right:1px solid #767a84;border-bottom:1px solid #767a84"></div>
<div class="row" style="top:634px;height:19px;line-height:18px">
<div class="vl" style="left:63px;top:0;height:19px;background:#e3e6e6"></div>
<div class="vl" style="left:114px;top:0;height:19px;background:#e3e6e6"></div>
<div class="vl" style="left:288px;top:0;height:19px;background:#e3e6e6"></div>
<div class="vl" style="left:472px;top:0;height:19px;background:#e3e6e6"></div>
<div class="vl" style="left:536px;top:0;height:19px;background:#e3e6e6"></div>
<div class="vl" style="left:857px;top:0;height:19px;background:#e3e6e6"></div>
<div class="vl" style="left:942px;top:0;height:19px;background:#e3e6e6"></div>
<div class="vl" style="left:1117px;top:0;height:19px;background:#e3e6e6"></div>
<div class="vl" style="left:1240px;top:0;height:19px;background:#e3e6e6"></div>
<div class="vl" style="left:1331px;top:0;height:19px;background:#e3e6e6"></div>
<div class="vl" style="left:1442px;top:0;height:19px;background:#e3e6e6"></div>
<div class="vl" style="left:1742px;top:0;height:19px;background:#e3e6e6"></div>
<div class="c" style="left:66px"><span class="x">13:30</span></div>
</div>
<div class="a" style="left:6px;top:653px;width:11px;height:19px;background:linear-gradient(#fdfdfe,#f0f0f3 50%,#d6d7de);border-right:1px solid #767a84;border-bottom:1px solid #767a84"></div>
<div class="row hl" style="top:653px;height:19px;line-height:18px">
<div class="vl" style="left:63px;top:0;height:19px;background:#e2e6ee"></div>
<div class="vl" style="left:114px;top:0;height:19px;background:#e2e6ee"></div>
<div class="vl" style="left:288px;top:0;height:19px;background:#e2e6ee"></div>
<div class="vl" style="left:472px;top:0;height:19px;background:#e2e6ee"></div>
<div class="vl" style="left:536px;top:0;height:19px;background:#e2e6ee"></div>
<div class="vl" style="left:857px;top:0;height:19px;background:#e2e6ee"></div>
<div class="vl" style="left:942px;top:0;height:19px;background:#e2e6ee"></div>
<div class="vl" style="left:1117px;top:0;height:19px;background:#e2e6ee"></div>
<div class="vl" style="left:1240px;top:0;height:19px;background:#e2e6ee"></div>
<div class="vl" style="left:1331px;top:0;height:19px;background:#e2e6ee"></div>
<div class="vl" style="left:1442px;top:0;height:19px;background:#e2e6ee"></div>
<div class="vl" style="left:1742px;top:0;height:19px;background:#e2e6ee"></div>
<div class="c" style="left:0;width:63px;background:#c0c0c0;color:#000;padding-left:2px"><span class="x">NORMAL</span></div>
<div class="c" style="left:66px"><span class="x">14:00</span></div>
<div class="a" style="left:118px;top:1px;width:16px;height:16px;border-radius:50%;background:#9adbe8;border:1px dashed #b4e4ee"></div>
<div class="c" style="left:114px;width:172px;text-align:right;letter-spacing:-.2px"><span class="x">Agendado</span></div>
<div class="c" style="left:291px"><span class="x">PARTICULAR</span></div>
<div class="c" style="left:472px;width:62px;text-align:right"><span class="x">299005</span></div>
<div class="c" style="left:539px"><span class="x">TESTE 2 DOIS</span></div>
<div class="c" style="left:860px;letter-spacing:.2px"><span class="x">20/05/2000</span></div>
<div class="c" style="left:1445px;letter-spacing:-.25px;top:0"><span class="x">TC RINS (30min)</span></div>
<div class="c" style="left:1745px;letter-spacing:.1px"><span class="x">14/01/2021 08:52:05</span></div>
</div>
<div class="a" style="left:6px;top:672px;width:11px;height:19px;background:linear-gradient(#fdfdfe,#f0f0f3 50%,#d6d7de);border-right:1px solid #767a84;border-bottom:1px solid #767a84"></div>
<div class="row sel" style="top:672px;height:19px;line-height:18px">
<div class="vl" style="left:63px;top:0;height:19px;background:#e2e6ee"></div>
<div class="vl" style="left:114px;top:0;height:19px;background:#e2e6ee"></div>
<div class="vl" style="left:288px;top:0;height:19px;background:#e2e6ee"></div>
<div class="vl" style="left:472px;top:0;height:19px;background:#e2e6ee"></div>
<div class="vl" style="left:536px;top:0;height:19px;background:#e2e6ee"></div>
<div class="vl" style="left:857px;top:0;height:19px;background:#e2e6ee"></div>
<div class="vl" style="left:942px;top:0;height:19px;background:#e2e6ee"></div>
<div class="vl" style="left:1117px;top:0;height:19px;background:#e2e6ee"></div>
<div class="vl" style="left:1240px;top:0;height:19px;background:#e2e6ee"></div>
<div class="vl" style="left:1331px;top:0;height:19px;background:#e2e6ee"></div>
<div class="vl" style="left:1442px;top:0;height:19px;background:#e2e6ee"></div>
<div class="vl" style="left:1742px;top:0;height:19px;background:#e2e6ee"></div>
<div class="c" style="left:0;width:63px;background:#c0c0c0;color:#000;padding-left:2px"><span class="x">NORMAL</span></div>
<div class="c" style="left:66px"><span class="x">14:30</span></div>
<div class="a" style="left:118px;top:1px;width:16px;height:16px;border-radius:50%;background:#9adbe8;border:1px dashed #e4f6fa"></div>
<div class="c" style="left:114px;width:172px;text-align:right;letter-spacing:-.2px"><span class="x">Agendado</span></div>
<div class="c" style="left:291px"><span class="x">IPASGO</span></div>
<div class="c" style="left:472px;width:62px;text-align:right"><span class="x">302432</span></div>
<div class="c" style="left:539px"><span class="x">TESTE 3</span></div>
<div class="c" style="left:860px;letter-spacing:.2px"><span class="x">10/10/2015</span></div>
<div class="c" style="left:1445px;letter-spacing:-.25px;top:0"><span class="x">TC ORBITA (30min)</span></div>
<div class="c" style="left:1745px;letter-spacing:.1px"><span class="x">14/01/2021 08:52:44</span></div>
</div>
<svg class="a" style="left:7px;top:676px" width="8" height="11" viewBox="0 0 8 11"><path d="M1.5 1L6 5.5L1.5 10" stroke="#5c5c8e" stroke-width="2.1" fill="none"/></svg>
<div class="a" style="left:6px;top:691px;width:11px;height:19px;background:linear-gradient(#fdfdfe,#f0f0f3 50%,#d6d7de);border-right:1px solid #767a84;border-bottom:1px solid #767a84"></div>
<div class="row hl" style="top:691px;height:19px;line-height:18px">
<div class="vl" style="left:63px;top:0;height:19px;background:#e2e6ee"></div>
<div class="vl" style="left:114px;top:0;height:19px;background:#e2e6ee"></div>
<div class="vl" style="left:288px;top:0;height:19px;background:#e2e6ee"></div>
<div class="vl" style="left:472px;top:0;height:19px;background:#e2e6ee"></div>
<div class="vl" style="left:536px;top:0;height:19px;background:#e2e6ee"></div>
<div class="vl" style="left:857px;top:0;height:19px;background:#e2e6ee"></div>
<div class="vl" style="left:942px;top:0;height:19px;background:#e2e6ee"></div>
<div class="vl" style="left:1117px;top:0;height:19px;background:#e2e6ee"></div>
<div class="vl" style="left:1240px;top:0;height:19px;background:#e2e6ee"></div>
<div class="vl" style="left:1331px;top:0;height:19px;background:#e2e6ee"></div>
<div class="vl" style="left:1442px;top:0;height:19px;background:#e2e6ee"></div>
<div class="vl" style="left:1742px;top:0;height:19px;background:#e2e6ee"></div>
<div class="c" style="left:0;width:63px;background:#c0c0c0;color:#000;padding-left:2px"><span class="x">NORMAL</span></div>
<div class="c" style="left:66px"><span class="x">15:00</span></div>
<div class="a" style="left:118px;top:1px;width:16px;height:16px;border-radius:50%;background:#9adbe8;border:1px dashed #b4e4ee"></div>
<div class="c" style="left:114px;width:172px;text-align:right;letter-spacing:-.2px"><span class="x">Agendado</span></div>
<div class="c" style="left:291px"><span class="x">PARTICULAR</span></div>
<div class="c" style="left:472px;width:62px;text-align:right"><span class="x">318072</span></div>
<div class="c" style="left:539px"><span class="x">TESTE TES</span></div>
<div class="c" style="left:860px;letter-spacing:.2px"><span class="x">01/01/1990</span></div>
<div class="c" style="left:1445px;letter-spacing:-.25px;top:0"><span class="x">TC RINS (30min)</span></div>
<div class="c" style="left:1745px;letter-spacing:.1px"><span class="x">14/01/2021 09:11:29</span></div>
</div>
<div class="a" style="left:6px;top:710px;width:11px;height:19px;background:linear-gradient(#fdfdfe,#f0f0f3 50%,#d6d7de);border-right:1px solid #767a84;border-bottom:1px solid #767a84"></div>
<div class="row" style="top:710px;height:19px;line-height:18px">
<div class="vl" style="left:63px;top:0;height:19px;background:#e3e6e6"></div>
<div class="vl" style="left:114px;top:0;height:19px;background:#e3e6e6"></div>
<div class="vl" style="left:288px;top:0;height:19px;background:#e3e6e6"></div>
<div class="vl" style="left:472px;top:0;height:19px;background:#e3e6e6"></div>
<div class="vl" style="left:536px;top:0;height:19px;background:#e3e6e6"></div>
<div class="vl" style="left:857px;top:0;height:19px;background:#e3e6e6"></div>
<div class="vl" style="left:942px;top:0;height:19px;background:#e3e6e6"></div>
<div class="vl" style="left:1117px;top:0;height:19px;background:#e3e6e6"></div>
<div class="vl" style="left:1240px;top:0;height:19px;background:#e3e6e6"></div>
<div class="vl" style="left:1331px;top:0;height:19px;background:#e3e6e6"></div>
<div class="vl" style="left:1442px;top:0;height:19px;background:#e3e6e6"></div>
<div class="vl" style="left:1742px;top:0;height:19px;background:#e3e6e6"></div>
<div class="c" style="left:66px"><span class="x">15:30</span></div>
</div>
<div class="a" style="left:6px;top:729px;width:11px;height:19px;background:linear-gradient(#fdfdfe,#f0f0f3 50%,#d6d7de);border-right:1px solid #767a84;border-bottom:1px solid #767a84"></div>
<div class="row" style="top:729px;height:19px;line-height:18px">
<div class="vl" style="left:63px;top:0;height:19px;background:#e3e6e6"></div>
<div class="vl" style="left:114px;top:0;height:19px;background:#e3e6e6"></div>
<div class="vl" style="left:288px;top:0;height:19px;background:#e3e6e6"></div>
<div class="vl" style="left:472px;top:0;height:19px;background:#e3e6e6"></div>
<div class="vl" style="left:536px;top:0;height:19px;background:#e3e6e6"></div>
<div class="vl" style="left:857px;top:0;height:19px;background:#e3e6e6"></div>
<div class="vl" style="left:942px;top:0;height:19px;background:#e3e6e6"></div>
<div class="vl" style="left:1117px;top:0;height:19px;background:#e3e6e6"></div>
<div class="vl" style="left:1240px;top:0;height:19px;background:#e3e6e6"></div>
<div class="vl" style="left:1331px;top:0;height:19px;background:#e3e6e6"></div>
<div class="vl" style="left:1442px;top:0;height:19px;background:#e3e6e6"></div>
<div class="vl" style="left:1742px;top:0;height:19px;background:#e3e6e6"></div>
<div class="c" style="left:66px"><span class="x">16:00</span></div>
</div>
<div class="a" style="left:6px;top:748px;width:11px;height:19px;background:linear-gradient(#fdfdfe,#f0f0f3 50%,#d6d7de);border-right:1px solid #767a84;border-bottom:1px solid #767a84"></div>
<div class="row" style="top:748px;height:19px;line-height:18px">
<div class="vl" style="left:63px;top:0;height:19px;background:#e3e6e6"></div>
<div class="vl" style="left:114px;top:0;height:19px;background:#e3e6e6"></div>
<div class="vl" style="left:288px;top:0;height:19px;background:#e3e6e6"></div>
<div class="vl" style="left:472px;top:0;height:19px;background:#e3e6e6"></div>
<div class="vl" style="left:536px;top:0;height:19px;background:#e3e6e6"></div>
<div class="vl" style="left:857px;top:0;height:19px;background:#e3e6e6"></div>
<div class="vl" style="left:942px;top:0;height:19px;background:#e3e6e6"></div>
<div class="vl" style="left:1117px;top:0;height:19px;background:#e3e6e6"></div>
<div class="vl" style="left:1240px;top:0;height:19px;background:#e3e6e6"></div>
<div class="vl" style="left:1331px;top:0;height:19px;background:#e3e6e6"></div>
<div class="vl" style="left:1442px;top:0;height:19px;background:#e3e6e6"></div>
<div class="vl" style="left:1742px;top:0;height:19px;background:#e3e6e6"></div>
<div class="c" style="left:66px"><span class="x">16:30</span></div>
</div>
<div class="a" style="left:6px;top:767px;width:11px;height:19px;background:linear-gradient(#fdfdfe,#f0f0f3 50%,#d6d7de);border-right:1px solid #767a84;border-bottom:1px solid #767a84"></div>
<div class="row" style="top:767px;height:19px;line-height:18px">
<div class="vl" style="left:63px;top:0;height:19px;background:#e3e6e6"></div>
<div class="vl" style="left:114px;top:0;height:19px;background:#e3e6e6"></div>
<div class="vl" style="left:288px;top:0;height:19px;background:#e3e6e6"></div>
<div class="vl" style="left:472px;top:0;height:19px;background:#e3e6e6"></div>
<div class="vl" style="left:536px;top:0;height:19px;background:#e3e6e6"></div>
<div class="vl" style="left:857px;top:0;height:19px;background:#e3e6e6"></div>
<div class="vl" style="left:942px;top:0;height:19px;background:#e3e6e6"></div>
<div class="vl" style="left:1117px;top:0;height:19px;background:#e3e6e6"></div>
<div class="vl" style="left:1240px;top:0;height:19px;background:#e3e6e6"></div>
<div class="vl" style="left:1331px;top:0;height:19px;background:#e3e6e6"></div>
<div class="vl" style="left:1442px;top:0;height:19px;background:#e3e6e6"></div>
<div class="vl" style="left:1742px;top:0;height:19px;background:#e3e6e6"></div>
<div class="c" style="left:66px"><span class="x">17:00</span></div>
</div>
<div class="a" style="left:6px;top:786px;width:11px;height:19px;background:linear-gradient(#fdfdfe,#f0f0f3 50%,#d6d7de);border-right:1px solid #767a84;border-bottom:1px solid #767a84"></div>
<div class="row" style="top:786px;height:19px;line-height:18px">
<div class="vl" style="left:63px;top:0;height:19px;background:#e3e6e6"></div>
<div class="vl" style="left:114px;top:0;height:19px;background:#e3e6e6"></div>
<div class="vl" style="left:288px;top:0;height:19px;background:#e3e6e6"></div>
<div class="vl" style="left:472px;top:0;height:19px;background:#e3e6e6"></div>
<div class="vl" style="left:536px;top:0;height:19px;background:#e3e6e6"></div>
<div class="vl" style="left:857px;top:0;height:19px;background:#e3e6e6"></div>
<div class="vl" style="left:942px;top:0;height:19px;background:#e3e6e6"></div>
<div class="vl" style="left:1117px;top:0;height:19px;background:#e3e6e6"></div>
<div class="vl" style="left:1240px;top:0;height:19px;background:#e3e6e6"></div>
<div class="vl" style="left:1331px;top:0;height:19px;background:#e3e6e6"></div>
<div class="vl" style="left:1442px;top:0;height:19px;background:#e3e6e6"></div>
<div class="vl" style="left:1742px;top:0;height:19px;background:#e3e6e6"></div>
<div class="c" style="left:66px"><span class="x">17:30</span></div>
</div>
<div class="a" style="left:6px;top:805px;width:11px;height:19px;background:linear-gradient(#fdfdfe,#f0f0f3 50%,#d6d7de);border-right:1px solid #767a84;border-bottom:1px solid #767a84"></div>
<div class="row" style="top:805px;height:19px;line-height:18px">
<div class="vl" style="left:63px;top:0;height:19px;background:#e3e6e6"></div>
<div class="vl" style="left:114px;top:0;height:19px;background:#e3e6e6"></div>
<div class="vl" style="left:288px;top:0;height:19px;background:#e3e6e6"></div>
<div class="vl" style="left:472px;top:0;height:19px;background:#e3e6e6"></div>
<div class="vl" style="left:536px;top:0;height:19px;background:#e3e6e6"></div>
<div class="vl" style="left:857px;top:0;height:19px;background:#e3e6e6"></div>
<div class="vl" style="left:942px;top:0;height:19px;background:#e3e6e6"></div>
<div class="vl" style="left:1117px;top:0;height:19px;background:#e3e6e6"></div>
<div class="vl" style="left:1240px;top:0;height:19px;background:#e3e6e6"></div>
<div class="vl" style="left:1331px;top:0;height:19px;background:#e3e6e6"></div>
<div class="vl" style="left:1442px;top:0;height:19px;background:#e3e6e6"></div>
<div class="vl" style="left:1742px;top:0;height:19px;background:#e3e6e6"></div>
<div class="c" style="left:66px"><span class="x">18:00</span></div>
</div>
<div class="a" style="left:5px;top:949px;width:1907px;height:16px;background:linear-gradient(#fafafa,#ececec)"></div>
<div class="a" style="left:22px;top:949px;width:926px;height:15px;border:1px solid #b4b4b8;border-radius:2px;background:linear-gradient(#fcfcfc,#ececee)"></div>
<svg class="a" style="left:479px;top:953px" width="10" height="8" viewBox="0 0 10 8"><path d="M1.5 1V7M3.5 1V7M5.5 1V7M7.5 1V7" stroke="#9a9aa2" stroke-width="1"/></svg>
<svg class="a" style="left:9px;top:952px" width="7" height="10" viewBox="0 0 7 10"><path d="M6 0.5V9.5L0.5 5Z" fill="#3d4a78"/></svg>
<svg class="a" style="left:1901px;top:952px" width="7" height="10" viewBox="0 0 7 10"><path d="M1 0.5V9.5L6.5 5Z" fill="#3d4a78"/></svg>
<div class="a" style="left:3px;top:966px;width:1911px;height:48px;border:1px solid #a0a0a0;border-top:none;border-bottom-color:#9c9c9c"></div>
<div class="a" style="left:3px;top:1014px;width:1912px;height:1px;background:#fff"></div>
<div class="btn" style="left:8px;top:971px;width:97px;height:19px;line-height:18px;"><span class="x">Agendar/Editar</span></div>
<div class="btn" style="left:107px;top:971px;width:92px;height:19px;line-height:18px;"><span class="x">Cancelar</span></div>
<div class="btn" style="left:200px;top:971px;width:93px;height:19px;line-height:18px;"><span class="x">Transferir</span></div>
<div class="btn" style="left:294px;top:971px;width:113px;height:19px;line-height:18px;"><span class="x">Bloquear/Desbloquear</span></div>
<div class="btn" style="left:408px;top:971px;width:73px;height:19px;line-height:18px;"><span class="x">Internar</span></div>
<div class="btn" style="left:482px;top:971px;width:93px;height:19px;line-height:18px;"><span class="x">Editar Ficha</span></div>
<div class="btn" style="left:576px;top:971px;width:93px;height:19px;line-height:18px;"><span class="x">Registrar Exame</span></div>
<div class="btn" style="left:670px;top:971px;width:94px;height:19px;line-height:18px;"><span class="x">Ag. Cancelados</span></div>
<div class="btn" style="left:765px;top:971px;width:94px;height:19px;line-height:18px;"><span class="x">Lib. Hr. Excedente</span></div>
<div class="btn" style="left:860px;top:971px;width:73px;height:19px;line-height:18px;text-align:left;padding-left:5px;letter-spacing:-.28px;"><span class="x">Protocolo</span></div>
<div class="btn" style="left:934px;top:971px;width:93px;height:19px;line-height:18px;text-align:left;padding-left:2px;letter-spacing:-.28px;"><span class="x">Dig. Img Dicom</span></div>
<div class="btn" style="left:8px;top:991px;width:97px;height:19px;line-height:18px;text-align:left;padding-left:1px;"><span class="x">Situação(status)</span></div>
<div class="btn" style="left:107px;top:991px;width:92px;height:19px;line-height:18px;border:2px solid #0078d7;line-height:16px;"><span class="x">Criar Novo Horário</span></div>
<div class="btn" style="left:200px;top:991px;width:93px;height:19px;line-height:18px;"><span class="x">Visualizar</span></div>
<div class="btn" style="left:294px;top:991px;width:113px;height:19px;line-height:18px;"><span class="x">Copiar</span></div>
<div class="btn" style="left:408px;top:991px;width:73px;height:19px;line-height:18px;"><span class="x">Conta</span></div>
<div class="btn" style="left:482px;top:991px;width:93px;height:19px;line-height:18px;"><span class="x">Vincular Ficha</span></div>
<div class="btn" style="left:576px;top:991px;width:93px;height:19px;line-height:18px;"><span class="x">Avaliar Satisfação</span></div>
<div class="btn" style="left:670px;top:991px;width:94px;height:19px;line-height:18px;"><span class="x">Exames desta data</span></div>
<div class="btn" style="left:765px;top:991px;width:94px;height:19px;line-height:18px;"><span class="x">Ag. Consultas</span></div>
<div class="btn" style="left:860px;top:991px;width:73px;height:19px;line-height:18px;"><span class="x">Preparo</span></div>
<div class="btn" style="left:934px;top:991px;width:93px;height:19px;line-height:18px;"><span class="x">Horários Confirm.</span></div>
<div class="a" style="left:918px;top:974px;width:2px;height:13px;background:#6a6a6a"></div>
<svg class="a" style="left:921px;top:978px" width="9" height="6" viewBox="0 0 9 6"><path d="M0 0.5H9L4.5 5.5Z" fill="#000"/></svg>
<div class="a" style="left:1012px;top:974px;width:2px;height:13px;background:#6a6a6a"></div>
<svg class="a" style="left:1015px;top:978px" width="9" height="6" viewBox="0 0 9 6"><path d="M0 0.5H9L4.5 5.5Z" fill="#000"/></svg>
<div class="a" style="left:91px;top:994px;width:2px;height:13px;background:#6a6a6a"></div>
<svg class="a" style="left:94px;top:998px" width="9" height="6" viewBox="0 0 9 6"><path d="M0 0.5H9L4.5 5.5Z" fill="#000"/></svg>
<div class="a" style="left:0;top:1022px;width:1920px;height:4px;background:#f0f0f0"></div>
<div class="a" style="left:0px;top:1023px;width:302px;height:6px;border:1px solid #a8a8a8;border-right-color:#dcdcdc"></div>
<div class="a" style="left:305px;top:1023px;width:1162px;height:6px;border:1px solid #a8a8a8;border-right-color:#dcdcdc"></div>
<div class="a" style="left:1471px;top:1023px;width:171px;height:6px;border:1px solid #a8a8a8;border-right-color:#dcdcdc"></div>
<div class="a" style="left:1646px;top:1023px;width:125px;height:6px;border:1px solid #a8a8a8;border-right-color:#dcdcdc"></div>
<div class="a" style="left:1775px;top:1023px;width:100px;height:6px;border:1px solid #a8a8a8;border-right-color:#dcdcdc"></div>
<div class="a" style="left:1879px;top:1023px;width:41px;height:6px;border:1px solid #a8a8a8;border-right-color:#dcdcdc"></div>
<div class="a" style="left:1913px;top:112px;width:1px;height:902px;background:#a2a2a2"></div>
<div class="a" style="left:1914px;top:110px;width:1px;height:905px;background:#fbfbfb"></div>
<div class="a" style="left:1915px;top:110px;width:5px;height:906px;background:linear-gradient(90deg,#bcbcbc,#d6d6d6 45%,#ececec)"></div>
<div class="a" style="left:0;top:1015px;width:1915px;height:6px;background:linear-gradient(#c8c8c8,#dedede 45%,#efefef)"></div>
<div class="a" style="left:1915px;top:1015px;width:5px;height:6px;background:linear-gradient(135deg,#c8c8c8,#e6e6e6 50%,#f0f0f0)"></div>
<div class="a" style="left:0;top:110px;width:1px;height:912px;background:#b8b8b8"></div>
<div class="a" style="left:1px;top:110px;width:1px;height:905px;background:#f8f8f8"></div>
<div class="a" style="left:3px;top:112px;width:1px;height:902px;background:#fcfcfc"></div>
<div class="obox" style="left:0;top:112px;width:316px;height:62px"></div>
<div class="obox" style="left:320px;top:106px;width:1593px;height:91px"></div>
<div class="obox" style="left:114px;top:205px;width:1362px;height:149px"></div>
<div class="obox" style="left:-1px;top:357px;width:333px;height:32px"></div>
<div class="obox" style="left:5px;top:961px;width:1029px;height:63px"></div>
<div class="rbox" style="left:5px;top:958px;width:104px;height:38px"></div>
<div class="badge bo" style="left:226px;top:113.5px">A</div>
<div class="badge br" style="left:276px;top:122px">4</div>
<div class="badge bo" style="left:412px;top:129px">B</div>
<div class="badge br" style="left:453px;top:150px">5</div>
<div class="badge bo" style="left:38px;top:259px">C</div>
<div class="badge br" style="left:81px;top:278px">6</div>
<div class="badge bo" style="left:225px;top:390px">D</div>
<div class="badge br" style="left:267px;top:402px">7</div>
<div class="badge bo" style="left:406px;top:713px">E</div>
<div class="badge br" style="left:461px;top:734px">8</div>
<div class="badge bo" style="left:406px;top:906px">F</div>
<div class="badge br" style="left:82px;top:916px">9</div>
</body></html>
